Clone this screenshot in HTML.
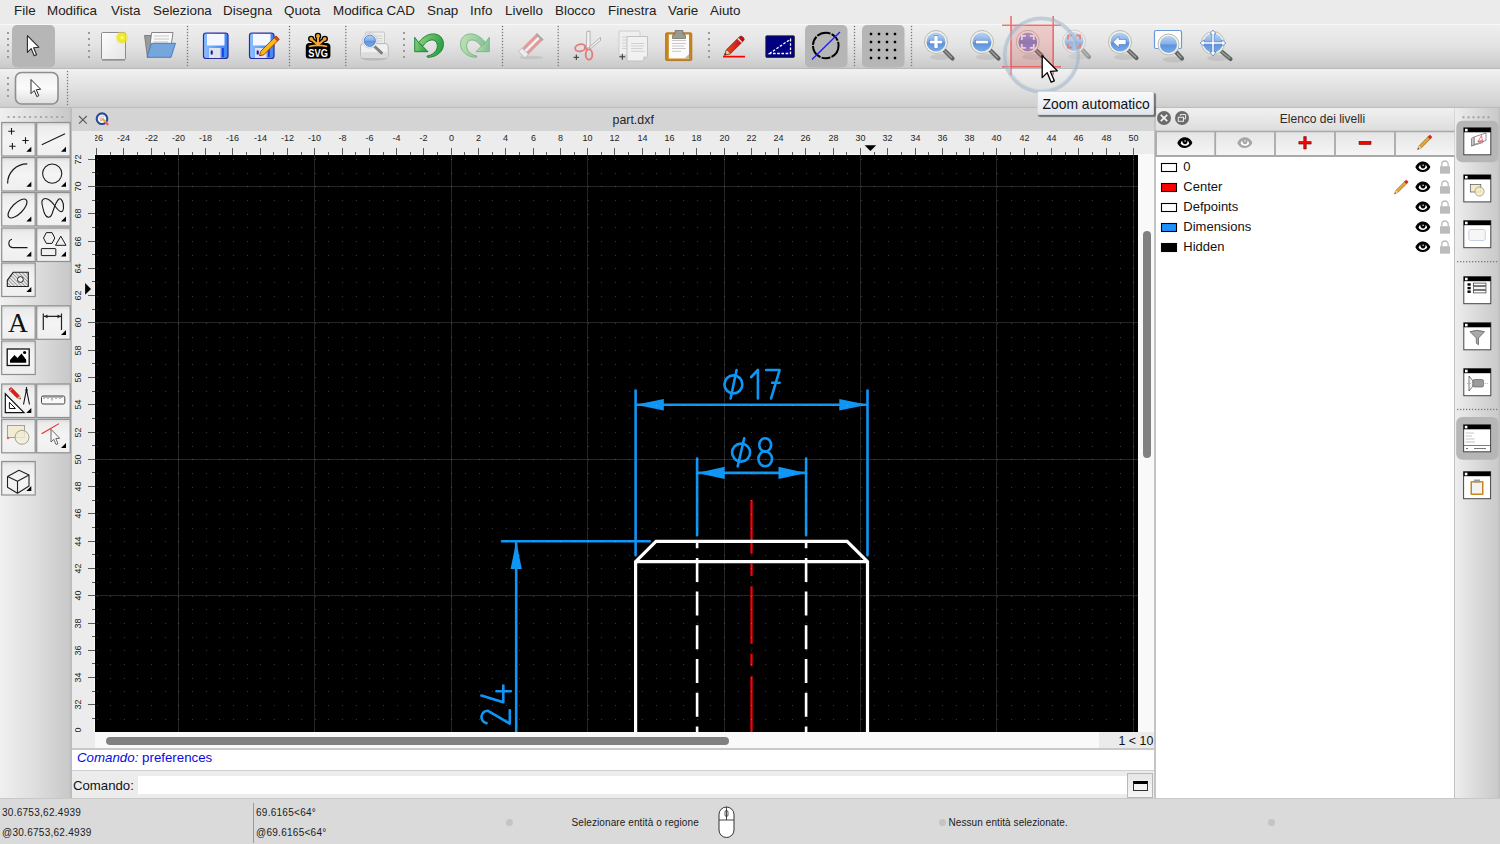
<!DOCTYPE html>
<html><head><meta charset="utf-8">
<style>
*{margin:0;padding:0;box-sizing:border-box}
html,body{width:1500px;height:844px;overflow:hidden;background:#ececec;font-family:"Liberation Sans",sans-serif;color:#222}
.a{position:absolute}
#menubar{left:0;top:0;width:1500px;height:24px;background:#ebebeb}
#menubar span{position:absolute;top:2.5px;font-size:13.4px;color:#222;line-height:16px}
#tb1{left:0;top:24px;width:1500px;height:45px;background:linear-gradient(#eeeeee,#e4e4e4 45%,#d4d4d4 80%,#c9c9c9);border-top:1px solid #f8f8f8;border-bottom:1px solid #b9b9b9}
#tb2{left:0;top:69px;width:1500px;height:39px;background:linear-gradient(#f1f1f1,#e2e2e2 45%,#d3d3d3 90%,#cdcdcd);border-bottom:1.5px solid #bcbcbc}
#palette{left:0;top:108px;width:70px;height:690px;background:linear-gradient(90deg,#f0f0f0,#dedede 50%,#c8c8c8)}
#palsep{left:70px;top:108px;width:2px;height:690px;background:#bdbdbd}
#mdititle{left:72px;top:108px;width:1082px;height:23px;background:#d4d4d4}
#ruler{left:72px;top:131px;width:1082px;height:24px;background:#ececec}
#vruler{left:72px;top:155px;width:23px;height:577px;background:#ececec}
#canvas{left:95px;top:155px;width:1043px;height:577px;background:#000}
#vscroll{left:1138px;top:155px;width:16px;height:577px;background:#f9f9f9}
#hscroll{left:95px;top:732px;width:1043px;height:16px;background:#f9f9f9}
#corner{left:72px;top:732px;width:23px;height:16px;background:#ececec}
#hist{left:72px;top:748px;width:1082px;height:23px;background:#fff;border-top:2px solid #c9c9c9;border-bottom:1px solid #cfcfcf}
#cmd{left:72px;top:771px;width:1082px;height:27px;background:#ececec}
#docksep{left:1154px;top:108px;width:2px;height:690px;background:#c4c4c4}
#layers{left:1156px;top:108px;width:298px;height:690px;background:#fff}
#rdock{left:1454px;top:108px;width:46px;height:690px;background:linear-gradient(90deg,#ededed,#d8d8d8 55%,#cacaca 95%,#bcbcbc);border-left:1px solid #c2c2c2}
#status{left:0;top:798px;width:1500px;height:46px;background:#dadada;border-top:1px solid #c8c8c8}
</style></head>
<body>
<div id="menubar" class="a">
<span style="left:14px">File</span><span style="left:47px">Modifica</span><span style="left:111px">Vista</span><span style="left:153px">Seleziona</span><span style="left:223px">Disegna</span><span style="left:284px">Quota</span><span style="left:333px">Modifica CAD</span><span style="left:427px">Snap</span><span style="left:470px">Info</span><span style="left:505px">Livello</span><span style="left:555px">Blocco</span><span style="left:608px">Finestra</span><span style="left:668px">Varie</span><span style="left:710px">Aiuto</span>
</div>
<div id="tb1" class="a"></div>
<div id="tb2" class="a"></div>
<svg class="a" style="left:0;top:0" width="1500" height="110" viewBox="0 0 1500 110"><defs>
<linearGradient id="gPage" x1="0" y1="0" x2="1" y2="1"><stop offset="0" stop-color="#fdfdfd"/><stop offset="1" stop-color="#e4e4e4"/></linearGradient>
<radialGradient id="gGlow"><stop offset="0" stop-color="#fff"/><stop offset="0.25" stop-color="#f4ee30"/><stop offset="0.6" stop-color="#ece41a" stop-opacity="0.9"/><stop offset="1" stop-color="#eee830" stop-opacity="0"/></radialGradient>
<linearGradient id="gFloppy" x1="0" y1="0" x2="1" y2="0"><stop offset="0" stop-color="#8fc0ff"/><stop offset="0.5" stop-color="#5d9cf8"/><stop offset="1" stop-color="#3f86f0"/></linearGradient>
<linearGradient id="gGlass" x1="0" y1="0" x2="0" y2="1"><stop offset="0" stop-color="#b9d3f2"/><stop offset="0.45" stop-color="#86b0e6"/><stop offset="0.55" stop-color="#5e93dc"/><stop offset="1" stop-color="#79a9ea"/></linearGradient>
<linearGradient id="gGlassP" x1="0" y1="0" x2="0" y2="1"><stop offset="0" stop-color="#9ea4dc"/><stop offset="0.5" stop-color="#7a82cc"/><stop offset="1" stop-color="#8c92d4"/></linearGradient>
<linearGradient id="gBtn2" x1="0" y1="0" x2="0" y2="1"><stop offset="0" stop-color="#f0f0f0"/><stop offset="0.5" stop-color="#fbfbfb"/><stop offset="1" stop-color="#dedede"/></linearGradient>
<linearGradient id="gPencil" x1="0" y1="0" x2="1" y2="0"><stop offset="0" stop-color="#e8541e"/><stop offset="1" stop-color="#c8001e"/></linearGradient>
<linearGradient id="gUndo" x1="0" y1="0" x2="1" y2="0.3"><stop offset="0" stop-color="#8ed47a"/><stop offset="1" stop-color="#2fa24a"/></linearGradient>
<linearGradient id="gRedo" x1="1" y1="0" x2="0" y2="0.3"><stop offset="0" stop-color="#c4e4b4"/><stop offset="1" stop-color="#86c496"/></linearGradient>
</defs><rect x="7" y="32" width="2" height="2" fill="#9a9a9a"/><rect x="7" y="38" width="2" height="2" fill="#9a9a9a"/><rect x="7" y="44" width="2" height="2" fill="#9a9a9a"/><rect x="7" y="50" width="2" height="2" fill="#9a9a9a"/><rect x="7" y="56" width="2" height="2" fill="#9a9a9a"/><rect x="88" y="32" width="2" height="2" fill="#9a9a9a"/><rect x="88" y="38" width="2" height="2" fill="#9a9a9a"/><rect x="88" y="44" width="2" height="2" fill="#9a9a9a"/><rect x="88" y="50" width="2" height="2" fill="#9a9a9a"/><rect x="88" y="56" width="2" height="2" fill="#9a9a9a"/><rect x="12" y="25" width="43" height="42.5" rx="5" fill="#b6b6b6"/><path d="M27.40 35.70 L27.40 52.40 L31.20 48.60 L34.20 55.80 L36.60 54.80 L33.60 47.70 L38.80 47.20Z" fill="#fff" stroke="#2a2a2a" stroke-width="1.1" stroke-linejoin="round"/><rect x="101.5" y="32.5" width="24" height="27" rx="1.2" fill="url(#gPage)" stroke="#8c8c8c" stroke-width="1"/><line x1="102" y1="60.3" x2="125" y2="60.3" stroke="#9a9a9a" stroke-width="1"/><circle cx="122" cy="37.7" r="7" fill="url(#gGlow)"/><path d="M144.5 35.5H151V56L147.5 57.5Z" fill="#9a9a9a" stroke="#707070" stroke-width="0.8"/><path d="M151.7 32.5H173L171.2 45H150Z" fill="#fafafa" stroke="#7a7a7a" stroke-width="0.9"/><path d="M154 36H169M154 39H169M153.5 42H168" stroke="#c4c4c4" stroke-width="1.2"/><path d="M151.3 43.3H175.5L171 57.3H147Z" fill="#76a6dc" stroke="#3f78c4" stroke-width="0.9"/><rect x="186.85" y="25.85" width="1.3" height="1.3" fill="#7a7a7a"/><rect x="186.85" y="28.85" width="1.3" height="1.3" fill="#7a7a7a"/><rect x="186.85" y="31.85" width="1.3" height="1.3" fill="#7a7a7a"/><rect x="186.85" y="34.85" width="1.3" height="1.3" fill="#7a7a7a"/><rect x="186.85" y="37.85" width="1.3" height="1.3" fill="#7a7a7a"/><rect x="186.85" y="40.85" width="1.3" height="1.3" fill="#7a7a7a"/><rect x="186.85" y="43.85" width="1.3" height="1.3" fill="#7a7a7a"/><rect x="186.85" y="46.85" width="1.3" height="1.3" fill="#7a7a7a"/><rect x="186.85" y="49.85" width="1.3" height="1.3" fill="#7a7a7a"/><rect x="186.85" y="52.85" width="1.3" height="1.3" fill="#7a7a7a"/><rect x="186.85" y="55.85" width="1.3" height="1.3" fill="#7a7a7a"/><rect x="186.85" y="58.85" width="1.3" height="1.3" fill="#7a7a7a"/><rect x="186.85" y="61.85" width="1.3" height="1.3" fill="#7a7a7a"/><rect x="186.85" y="64.85" width="1.3" height="1.3" fill="#7a7a7a"/><rect x="203.5" y="33" width="24.5" height="25.5" rx="2.5" fill="url(#gFloppy)" stroke="#2b2ba0" stroke-width="1.2"/><rect x="207.0" y="34" width="17.5" height="11.5" fill="#f4f7ff"/><rect x="209.0" y="48" width="11.5" height="10" fill="#e2e2ea"/><rect x="210.7" y="50.5" width="2" height="4" fill="#1010c0"/><rect x="222.0" y="48" width="1.8" height="9" fill="#1a3fd8"/><rect x="249.5" y="33" width="24.5" height="25.5" rx="2.5" fill="url(#gFloppy)" stroke="#2b2ba0" stroke-width="1.2"/><rect x="253.0" y="34" width="17.5" height="11.5" fill="#f4f7ff"/><rect x="255.0" y="48" width="11.5" height="10" fill="#e2e2ea"/><rect x="256.7" y="50.5" width="2" height="4" fill="#1010c0"/><rect x="268.0" y="48" width="1.8" height="9" fill="#1a3fd8"/><path d="M260.5 51.5L274.3 37.6L277.6 40.9L263.8 54.8L259.5 55.8Z" fill="#f8b818" stroke="#a83010" stroke-width="0.9"/><path d="M274.3 37.6L276 35.9L279.3 39.2L277.6 40.9Z" fill="#e84040" stroke="#a83010" stroke-width="0.9"/><rect x="288.85" y="25.85" width="1.3" height="1.3" fill="#7a7a7a"/><rect x="288.85" y="28.85" width="1.3" height="1.3" fill="#7a7a7a"/><rect x="288.85" y="31.85" width="1.3" height="1.3" fill="#7a7a7a"/><rect x="288.85" y="34.85" width="1.3" height="1.3" fill="#7a7a7a"/><rect x="288.85" y="37.85" width="1.3" height="1.3" fill="#7a7a7a"/><rect x="288.85" y="40.85" width="1.3" height="1.3" fill="#7a7a7a"/><rect x="288.85" y="43.85" width="1.3" height="1.3" fill="#7a7a7a"/><rect x="288.85" y="46.85" width="1.3" height="1.3" fill="#7a7a7a"/><rect x="288.85" y="49.85" width="1.3" height="1.3" fill="#7a7a7a"/><rect x="288.85" y="52.85" width="1.3" height="1.3" fill="#7a7a7a"/><rect x="288.85" y="55.85" width="1.3" height="1.3" fill="#7a7a7a"/><rect x="288.85" y="58.85" width="1.3" height="1.3" fill="#7a7a7a"/><rect x="288.85" y="61.85" width="1.3" height="1.3" fill="#7a7a7a"/><rect x="288.85" y="64.85" width="1.3" height="1.3" fill="#7a7a7a"/><rect x="305.8" y="43.5" width="24.6" height="15" rx="3" fill="#000"/><g stroke="#000" stroke-width="4.6" stroke-linecap="round"><path d="M318 45V36.3M318 45L311.3 39M318 45L324.7 39M318 45L309 45.3M318 45L327 45.3"/></g><g fill="#f5a630" stroke="#000" stroke-width="1.3"><circle cx="318" cy="36" r="2.6"/><circle cx="311.2" cy="38.8" r="2.5"/><circle cx="324.8" cy="38.8" r="2.5"/></g><g stroke="#f5a630" stroke-width="2.2" stroke-linecap="round"><path d="M318 45V36.3M318 45L311.3 39M318 45L324.7 39"/></g><path d="M308.8 46.5Q318 44.2 327.2 46.5" stroke="#f5a630" stroke-width="1.8" fill="none"/><text x="318.1" y="57.2" font-family="Liberation Sans" font-weight="bold" font-size="11.5" fill="#fff" text-anchor="middle" textLength="19.5" lengthAdjust="spacingAndGlyphs">SVG</text><rect x="345.1" y="25.85" width="1.3" height="1.3" fill="#7a7a7a"/><rect x="345.1" y="28.85" width="1.3" height="1.3" fill="#7a7a7a"/><rect x="345.1" y="31.85" width="1.3" height="1.3" fill="#7a7a7a"/><rect x="345.1" y="34.85" width="1.3" height="1.3" fill="#7a7a7a"/><rect x="345.1" y="37.85" width="1.3" height="1.3" fill="#7a7a7a"/><rect x="345.1" y="40.85" width="1.3" height="1.3" fill="#7a7a7a"/><rect x="345.1" y="43.85" width="1.3" height="1.3" fill="#7a7a7a"/><rect x="345.1" y="46.85" width="1.3" height="1.3" fill="#7a7a7a"/><rect x="345.1" y="49.85" width="1.3" height="1.3" fill="#7a7a7a"/><rect x="345.1" y="52.85" width="1.3" height="1.3" fill="#7a7a7a"/><rect x="345.1" y="55.85" width="1.3" height="1.3" fill="#7a7a7a"/><rect x="345.1" y="58.85" width="1.3" height="1.3" fill="#7a7a7a"/><rect x="345.1" y="61.85" width="1.3" height="1.3" fill="#7a7a7a"/><rect x="345.1" y="64.85" width="1.3" height="1.3" fill="#7a7a7a"/><ellipse cx="374" cy="58.5" rx="13" ry="2" fill="#000" opacity="0.12"/><rect x="365.5" y="32" width="19" height="14" rx="1.2" fill="#ececec" stroke="#c2c2c2" stroke-width="0.9"/><path d="M374 36H382M374 38.5H382M374 41H382" stroke="#d0d0d0" stroke-width="1"/><rect x="360.6" y="43.6" width="27.6" height="14" rx="2.5" fill="#f0f0f0" stroke="#b4b4b4" stroke-width="1"/><rect x="361.2" y="52.3" width="26.4" height="5.6" rx="2.2" fill="#dcdcdc"/><line x1="373.5" y1="45.5" x2="381.5" y2="52.8" stroke="#7e7e7e" stroke-width="3" stroke-linecap="round"/><circle cx="369.8" cy="40.8" r="7.3" fill="#f6f6f6" stroke="#c4c4c4" stroke-width="0.8"/><circle cx="369.8" cy="40.8" r="5.6" fill="url(#gGlass)" stroke="#4a7ed0" stroke-width="0.9"/><rect x="403" y="32" width="2" height="2" fill="#9a9a9a"/><rect x="403" y="38" width="2" height="2" fill="#9a9a9a"/><rect x="403" y="44" width="2" height="2" fill="#9a9a9a"/><rect x="403" y="50" width="2" height="2" fill="#9a9a9a"/><rect x="403" y="56" width="2" height="2" fill="#9a9a9a"/><path d="M418.5 42.5C424 35.5 431 32.5 437 34.5C442.5 36.5 444.5 42 443 47.5C441.5 53 435 57.5 427.5 57.3L427 56C432 55.5 436.5 51.5 437.2 47.5C438 42.5 435 39.5 431 40C428 40.5 425 43 422.7 46.3Z" fill="url(#gUndo)" stroke="#177a2c" stroke-width="0.9"/><path d="M414.7 37.3V51.7H428L422.7 46.3L418.5 42.5Z" fill="url(#gUndo)" stroke="#177a2c" stroke-width="0.9" stroke-linejoin="round"/><g transform="translate(904 0) scale(-1 1)"><path d="M418.5 42.5C424 35.5 431 32.5 437 34.5C442.5 36.5 444.5 42 443 47.5C441.5 53 435 57.5 427.5 57.3L427 56C432 55.5 436.5 51.5 437.2 47.5C438 42.5 435 39.5 431 40C428 40.5 425 43 422.7 46.3Z" fill="url(#gRedo)" stroke="#74b488" stroke-width="0.9"/><path d="M414.7 37.3V51.7H428L422.7 46.3L418.5 42.5Z" fill="url(#gRedo)" stroke="#74b488" stroke-width="0.9" stroke-linejoin="round"/></g><rect x="501.85" y="25.85" width="1.3" height="1.3" fill="#7a7a7a"/><rect x="501.85" y="28.85" width="1.3" height="1.3" fill="#7a7a7a"/><rect x="501.85" y="31.85" width="1.3" height="1.3" fill="#7a7a7a"/><rect x="501.85" y="34.85" width="1.3" height="1.3" fill="#7a7a7a"/><rect x="501.85" y="37.85" width="1.3" height="1.3" fill="#7a7a7a"/><rect x="501.85" y="40.85" width="1.3" height="1.3" fill="#7a7a7a"/><rect x="501.85" y="43.85" width="1.3" height="1.3" fill="#7a7a7a"/><rect x="501.85" y="46.85" width="1.3" height="1.3" fill="#7a7a7a"/><rect x="501.85" y="49.85" width="1.3" height="1.3" fill="#7a7a7a"/><rect x="501.85" y="52.85" width="1.3" height="1.3" fill="#7a7a7a"/><rect x="501.85" y="55.85" width="1.3" height="1.3" fill="#7a7a7a"/><rect x="501.85" y="58.85" width="1.3" height="1.3" fill="#7a7a7a"/><rect x="501.85" y="61.85" width="1.3" height="1.3" fill="#7a7a7a"/><rect x="501.85" y="64.85" width="1.3" height="1.3" fill="#7a7a7a"/><ellipse cx="531" cy="57.5" rx="12" ry="1.8" fill="#000" opacity="0.08"/><g transform="rotate(-45 531 45.5)"><rect x="518" y="41" width="26" height="9" fill="#e49a9a" stroke="#c8c8c8" stroke-width="0.6"/><rect x="522" y="44.2" width="22" height="2.6" fill="#f2f2f2"/><rect x="518" y="41" width="5" height="9" fill="#ececec" stroke="#b0b0b0" stroke-width="0.6"/><rect x="542" y="41" width="2" height="9" fill="#a8a8a8"/></g><rect x="557.6" y="25.85" width="1.3" height="1.3" fill="#7a7a7a"/><rect x="557.6" y="28.85" width="1.3" height="1.3" fill="#7a7a7a"/><rect x="557.6" y="31.85" width="1.3" height="1.3" fill="#7a7a7a"/><rect x="557.6" y="34.85" width="1.3" height="1.3" fill="#7a7a7a"/><rect x="557.6" y="37.85" width="1.3" height="1.3" fill="#7a7a7a"/><rect x="557.6" y="40.85" width="1.3" height="1.3" fill="#7a7a7a"/><rect x="557.6" y="43.85" width="1.3" height="1.3" fill="#7a7a7a"/><rect x="557.6" y="46.85" width="1.3" height="1.3" fill="#7a7a7a"/><rect x="557.6" y="49.85" width="1.3" height="1.3" fill="#7a7a7a"/><rect x="557.6" y="52.85" width="1.3" height="1.3" fill="#7a7a7a"/><rect x="557.6" y="55.85" width="1.3" height="1.3" fill="#7a7a7a"/><rect x="557.6" y="58.85" width="1.3" height="1.3" fill="#7a7a7a"/><rect x="557.6" y="61.85" width="1.3" height="1.3" fill="#7a7a7a"/><rect x="557.6" y="64.85" width="1.3" height="1.3" fill="#7a7a7a"/><path d="M586.5 48.5L586.8 31.5L590 31L590 47Z" fill="#f4f4f4" stroke="#9a9a9a" stroke-width="0.7"/><path d="M589.5 47L600.5 37.5V40.5L590 49Z" fill="#f4f4f4" stroke="#9a9a9a" stroke-width="0.7"/><ellipse cx="580.3" cy="47.8" rx="5.2" ry="3.5" transform="rotate(-12 580.3 47.8)" fill="none" stroke="#e07c7c" stroke-width="1.8"/><ellipse cx="589" cy="54.5" rx="3.3" ry="5.2" fill="none" stroke="#e07c7c" stroke-width="1.8"/><path d="M584 47.5L587.5 49.5" stroke="#e07c7c" stroke-width="2"/><path d="M576.3 54.5V60M573.5 57.3H579" stroke="#333" stroke-width="1"/><path d="M619 31H638.5Q640 31 640 32.5V55H619Z" fill="#efefef" stroke="#c6c6c6" stroke-width="0.8"/><path d="M622 37H630M622 40H630M622 43H630M622 46H630M622 48.5H630" stroke="#d2d2d2" stroke-width="1"/><path d="M627 36.5H647.5V56.5L643 61H627Z" fill="#f1f1f1" stroke="#bdbdbd" stroke-width="0.9"/><path d="M643 61V56.5H647.5Z" fill="#cfcfcf"/><path d="M631 43.5H644.5M631 46H644M631 48.5H642.5M631 51.3H644.5" stroke="#cdcdcd" stroke-width="0.9"/><path d="M622.3 53.8V59.8M619.3 56.8H625.3" stroke="#333" stroke-width="1"/><rect x="665.6" y="32.8" width="26.2" height="27.8" rx="1.3" fill="#c8861a" stroke="#a86a10" stroke-width="0.8"/><rect x="668.8" y="34.5" width="20.2" height="24" fill="#fbfbfb"/><path d="M684.5 58.5H689V54Z" fill="#b8b8b8"/><path d="M672.5 38.5V36Q672.5 34 674.5 34H675V30.5H683V34H683.5Q685.5 34 685.5 36V38.5Z" fill="#9a9a8e" stroke="#6a6a60" stroke-width="0.7"/><path d="M672 40.5H686M672 43.5H686M672 46H684M672 48.5H686M672 51.3H681" stroke="#c2c2c2" stroke-width="0.9"/><rect x="708" y="32" width="2" height="2" fill="#9a9a9a"/><rect x="708" y="38" width="2" height="2" fill="#9a9a9a"/><rect x="708" y="44" width="2" height="2" fill="#9a9a9a"/><rect x="708" y="50" width="2" height="2" fill="#9a9a9a"/><rect x="708" y="56" width="2" height="2" fill="#9a9a9a"/><rect x="723" y="55.8" width="22" height="1.7" fill="#f00"/><path d="M724.4 55.2L726.6 49.6L739.3 36.9Q741 35.2 742.8 37L743.4 37.6Q745.1 39.3 743.4 41L730.5 53.6Z" fill="url(#gPencil)" stroke="#6a3a10" stroke-width="0.8"/><path d="M724.4 55.2L726.6 49.6L730.5 53.6Z" fill="#f0c8a0" stroke="#6a3a10" stroke-width="0.6"/><path d="M724.4 55.2L725.3 53L726.6 54.3Z" fill="#222"/><path d="M737.8 38.4L741.9 42.5" stroke="#d8d8d8" stroke-width="1.6"/><rect x="765.8" y="35.8" width="28.6" height="21.6" rx="1" fill="#000080" stroke="#222" stroke-width="0.8"/><path d="M769.5 53.5L790.5 39.2V53.5Z" fill="none" stroke="#fff" stroke-width="1.3" stroke-dasharray="2.6 1.6"/><rect x="805" y="25" width="42.5" height="42.5" rx="5" fill="#b6b6b6"/><circle cx="825.75" cy="45.5" r="12.8" fill="none" stroke="#000" stroke-width="2" stroke-dasharray="14 1.2 9 1.2"/><line x1="812" y1="59.5" x2="840" y2="32" stroke="#1a1aff" stroke-width="1.3"/><rect x="853.85" y="25.85" width="1.3" height="1.3" fill="#7a7a7a"/><rect x="853.85" y="28.85" width="1.3" height="1.3" fill="#7a7a7a"/><rect x="853.85" y="31.85" width="1.3" height="1.3" fill="#7a7a7a"/><rect x="853.85" y="34.85" width="1.3" height="1.3" fill="#7a7a7a"/><rect x="853.85" y="37.85" width="1.3" height="1.3" fill="#7a7a7a"/><rect x="853.85" y="40.85" width="1.3" height="1.3" fill="#7a7a7a"/><rect x="853.85" y="43.85" width="1.3" height="1.3" fill="#7a7a7a"/><rect x="853.85" y="46.85" width="1.3" height="1.3" fill="#7a7a7a"/><rect x="853.85" y="49.85" width="1.3" height="1.3" fill="#7a7a7a"/><rect x="853.85" y="52.85" width="1.3" height="1.3" fill="#7a7a7a"/><rect x="853.85" y="55.85" width="1.3" height="1.3" fill="#7a7a7a"/><rect x="853.85" y="58.85" width="1.3" height="1.3" fill="#7a7a7a"/><rect x="853.85" y="61.85" width="1.3" height="1.3" fill="#7a7a7a"/><rect x="853.85" y="64.85" width="1.3" height="1.3" fill="#7a7a7a"/><rect x="862" y="25" width="42.5" height="42.5" rx="5" fill="#b6b6b6"/><rect x="869.8" y="32.8" width="2.4" height="2.4" fill="#000"/><rect x="869.8" y="40.8" width="2.4" height="2.4" fill="#000"/><rect x="869.8" y="48.8" width="2.4" height="2.4" fill="#000"/><rect x="869.8" y="56.8" width="2.4" height="2.4" fill="#000"/><rect x="877.8" y="32.8" width="2.4" height="2.4" fill="#000"/><rect x="877.8" y="40.8" width="2.4" height="2.4" fill="#000"/><rect x="877.8" y="48.8" width="2.4" height="2.4" fill="#000"/><rect x="877.8" y="56.8" width="2.4" height="2.4" fill="#000"/><rect x="885.8" y="32.8" width="2.4" height="2.4" fill="#000"/><rect x="885.8" y="40.8" width="2.4" height="2.4" fill="#000"/><rect x="885.8" y="48.8" width="2.4" height="2.4" fill="#000"/><rect x="885.8" y="56.8" width="2.4" height="2.4" fill="#000"/><rect x="893.8" y="32.8" width="2.4" height="2.4" fill="#000"/><rect x="893.8" y="40.8" width="2.4" height="2.4" fill="#000"/><rect x="893.8" y="48.8" width="2.4" height="2.4" fill="#000"/><rect x="893.8" y="56.8" width="2.4" height="2.4" fill="#000"/><rect x="910.85" y="25.85" width="1.3" height="1.3" fill="#7a7a7a"/><rect x="910.85" y="28.85" width="1.3" height="1.3" fill="#7a7a7a"/><rect x="910.85" y="31.85" width="1.3" height="1.3" fill="#7a7a7a"/><rect x="910.85" y="34.85" width="1.3" height="1.3" fill="#7a7a7a"/><rect x="910.85" y="37.85" width="1.3" height="1.3" fill="#7a7a7a"/><rect x="910.85" y="40.85" width="1.3" height="1.3" fill="#7a7a7a"/><rect x="910.85" y="43.85" width="1.3" height="1.3" fill="#7a7a7a"/><rect x="910.85" y="46.85" width="1.3" height="1.3" fill="#7a7a7a"/><rect x="910.85" y="49.85" width="1.3" height="1.3" fill="#7a7a7a"/><rect x="910.85" y="52.85" width="1.3" height="1.3" fill="#7a7a7a"/><rect x="910.85" y="55.85" width="1.3" height="1.3" fill="#7a7a7a"/><rect x="910.85" y="58.85" width="1.3" height="1.3" fill="#7a7a7a"/><rect x="910.85" y="61.85" width="1.3" height="1.3" fill="#7a7a7a"/><rect x="910.85" y="64.85" width="1.3" height="1.3" fill="#7a7a7a"/><ellipse cx="941" cy="57" rx="11" ry="3" fill="#000" opacity="0.08"/><line x1="944" y1="50" x2="952.5" y2="58.5" stroke="#5f6462" stroke-width="4.2" stroke-linecap="round"/><line x1="945" y1="51" x2="951.5" y2="57.5" stroke="#9aa09c" stroke-width="1.4" stroke-linecap="round"/><circle cx="936" cy="42" r="11.5" fill="#f2f2ea" stroke="#b9b9ad" stroke-width="1"/><circle cx="936" cy="42" r="9.5" fill="url(#gGlass)"/><rect x="934.2" y="35.5" width="3.6" height="13" fill="#fff" stroke="#3a6ab8" stroke-width="0.5"/><rect x="929.5" y="40.2" width="13" height="3.6" fill="#fff" stroke="#3a6ab8" stroke-width="0.5"/><rect x="934.5" y="36" width="3" height="12" fill="#fff"/><ellipse cx="987" cy="57" rx="11" ry="3" fill="#000" opacity="0.08"/><line x1="990" y1="50" x2="998.5" y2="58.5" stroke="#5f6462" stroke-width="4.2" stroke-linecap="round"/><line x1="991" y1="51" x2="997.5" y2="57.5" stroke="#9aa09c" stroke-width="1.4" stroke-linecap="round"/><circle cx="982" cy="42" r="11.5" fill="#f2f2ea" stroke="#b9b9ad" stroke-width="1"/><circle cx="982" cy="42" r="9.5" fill="url(#gGlass)"/><rect x="975.5" y="40.2" width="13" height="3.6" fill="#fff" stroke="#3a6ab8" stroke-width="0.5"/><ellipse cx="1032.8" cy="56.9" rx="11" ry="3" fill="#000" opacity="0.08"/><line x1="1035.8" y1="49.9" x2="1042" y2="56" stroke="#5f6462" stroke-width="4.2" stroke-linecap="round"/><line x1="1036.8" y1="50.9" x2="1041" y2="55" stroke="#9aa09c" stroke-width="1.4" stroke-linecap="round"/><circle cx="1027.8" cy="41.9" r="11.5" fill="#f2f2ea" stroke="#b9b9ad" stroke-width="1"/><circle cx="1027.8" cy="41.9" r="9.5" fill="url(#gGlassP)"/><path d="M1021.8 39.9V35.9H1025.8M1029.8 35.9H1033.8V39.9M1033.8 43.9V47.9H1029.8M1025.8 47.9H1021.8V43.9" fill="none" stroke="#f4eef4" stroke-width="1.8"/><g opacity="0.55"><ellipse cx="1079" cy="56.5" rx="11" ry="3" fill="#000" opacity="0.08"/><line x1="1082" y1="49.5" x2="1089" y2="57" stroke="#5f6462" stroke-width="4.2" stroke-linecap="round"/><line x1="1083" y1="50.5" x2="1088" y2="56" stroke="#9aa09c" stroke-width="1.4" stroke-linecap="round"/><circle cx="1074" cy="41.5" r="11.5" fill="#f2f2ea" stroke="#b9b9ad" stroke-width="1"/><circle cx="1074" cy="41.5" r="9.5" fill="url(#gGlass)"/><path d="M1068 39.5V35.5H1072M1076 35.5H1080V39.5M1080 43.5V47.5H1076M1072 47.5H1068V43.5" fill="none" stroke="#e83030" stroke-width="1.8"/></g><ellipse cx="1125" cy="57" rx="11" ry="3" fill="#000" opacity="0.08"/><line x1="1128" y1="50" x2="1136.5" y2="58" stroke="#5f6462" stroke-width="4.2" stroke-linecap="round"/><line x1="1129" y1="51" x2="1135.5" y2="57" stroke="#9aa09c" stroke-width="1.4" stroke-linecap="round"/><circle cx="1120" cy="42" r="11.5" fill="#f2f2ea" stroke="#b9b9ad" stroke-width="1"/><circle cx="1120" cy="42" r="9.5" fill="url(#gGlass)"/><path d="M1113 42L1119 36.5V39.5H1126V44.5H1119V47.5Z" fill="#fff" stroke="#3a6ab8" stroke-width="0.5"/><rect x="1154.5" y="30.5" width="27" height="18" rx="1.5" fill="#fff" stroke="#6a98d8" stroke-width="1.2"/><ellipse cx="1173.5" cy="59.5" rx="11" ry="3" fill="#000" opacity="0.08"/><line x1="1176.5" y1="52.5" x2="1182" y2="58.5" stroke="#5f6462" stroke-width="4.2" stroke-linecap="round"/><line x1="1177.5" y1="53.5" x2="1181" y2="57.5" stroke="#9aa09c" stroke-width="1.4" stroke-linecap="round"/><circle cx="1168.5" cy="44.5" r="10.5" fill="#f2f2ea" stroke="#b9b9ad" stroke-width="1"/><circle cx="1168.5" cy="44.5" r="8.5" fill="url(#gGlass)"/><ellipse cx="1218" cy="58" rx="11" ry="3" fill="#000" opacity="0.08"/><line x1="1221" y1="51" x2="1230.5" y2="59" stroke="#5f6462" stroke-width="4.2" stroke-linecap="round"/><line x1="1222" y1="52" x2="1229.5" y2="58" stroke="#9aa09c" stroke-width="1.4" stroke-linecap="round"/><circle cx="1213" cy="43" r="11.5" fill="#f2f2ea" stroke="#b9b9ad" stroke-width="1"/><circle cx="1213" cy="43" r="9.5" fill="url(#gGlass)"/><path d="M1213 30L1216 34H1214.2V41.8H1222V40L1226 43L1222 46V44.2H1214.2V52H1216L1213 56L1210 52H1211.8V44.2H1204V46L1200 43L1204 40V41.8H1211.8V34H1210Z" fill="#fff" stroke="#3a6ab8" stroke-width="0.6"/><rect x="7" y="77" width="2" height="2" fill="#9a9a9a"/><rect x="7" y="83" width="2" height="2" fill="#9a9a9a"/><rect x="7" y="89" width="2" height="2" fill="#9a9a9a"/><rect x="7" y="95" width="2" height="2" fill="#9a9a9a"/><rect x="15.5" y="72.5" width="42.5" height="31.5" rx="6" fill="url(#gBtn2)" stroke="#8e8e8e" stroke-width="1.6"/><path d="M31.00 79.50 L31.00 93.69 L34.23 90.47 L36.78 96.59 L38.82 95.73 L36.27 89.70 L40.69 89.28Z" fill="#fff" stroke="#2a2a2a" stroke-width="1.0" stroke-linejoin="round"/><rect x="66.85" y="70.85" width="1.3" height="1.3" fill="#7a7a7a"/><rect x="66.85" y="73.85" width="1.3" height="1.3" fill="#7a7a7a"/><rect x="66.85" y="76.85" width="1.3" height="1.3" fill="#7a7a7a"/><rect x="66.85" y="79.85" width="1.3" height="1.3" fill="#7a7a7a"/><rect x="66.85" y="82.85" width="1.3" height="1.3" fill="#7a7a7a"/><rect x="66.85" y="85.85" width="1.3" height="1.3" fill="#7a7a7a"/><rect x="66.85" y="88.85" width="1.3" height="1.3" fill="#7a7a7a"/><rect x="66.85" y="91.85" width="1.3" height="1.3" fill="#7a7a7a"/><rect x="66.85" y="94.85" width="1.3" height="1.3" fill="#7a7a7a"/><rect x="66.85" y="97.85" width="1.3" height="1.3" fill="#7a7a7a"/><rect x="66.85" y="100.85" width="1.3" height="1.3" fill="#7a7a7a"/><rect x="66.85" y="103.85" width="1.3" height="1.3" fill="#7a7a7a"/></svg>
<div id="palette" class="a"></div>
<div id="palsep" class="a"></div>
<svg class="a" style="left:0;top:108px" width="72" height="400" viewBox="0 108 72 400"><defs><linearGradient id="gPal" x1="0" y1="0" x2="0" y2="1"><stop offset="0" stop-color="#d8d8d8"/><stop offset="0.12" stop-color="#ececec"/><stop offset="0.5" stop-color="#f4f4f4"/><stop offset="1" stop-color="#efefef"/></linearGradient></defs><rect x="7.5" y="116" width="2" height="2" fill="#a8a8a8"/><rect x="12.9" y="116" width="2" height="2" fill="#a8a8a8"/><rect x="18.3" y="116" width="2" height="2" fill="#a8a8a8"/><rect x="23.700000000000003" y="116" width="2" height="2" fill="#a8a8a8"/><rect x="29.1" y="116" width="2" height="2" fill="#a8a8a8"/><rect x="34.5" y="116" width="2" height="2" fill="#a8a8a8"/><rect x="39.900000000000006" y="116" width="2" height="2" fill="#a8a8a8"/><rect x="45.300000000000004" y="116" width="2" height="2" fill="#a8a8a8"/><rect x="50.7" y="116" width="2" height="2" fill="#a8a8a8"/><rect x="56.1" y="116" width="2" height="2" fill="#a8a8a8"/><rect x="61.5" y="116" width="2" height="2" fill="#a8a8a8"/><rect x="1.7" y="122.5" width="33.5" height="33.5" fill="url(#gPal)" stroke="#8f8f8f" stroke-width="1.2"/><rect x="36.7" y="122.5" width="33.5" height="33.5" fill="url(#gPal)" stroke="#8f8f8f" stroke-width="1.2"/><rect x="1.7" y="157.5" width="33.5" height="33.5" fill="url(#gPal)" stroke="#8f8f8f" stroke-width="1.2"/><rect x="36.7" y="157.5" width="33.5" height="33.5" fill="url(#gPal)" stroke="#8f8f8f" stroke-width="1.2"/><rect x="1.7" y="192.5" width="33.5" height="33.5" fill="url(#gPal)" stroke="#8f8f8f" stroke-width="1.2"/><rect x="36.7" y="192.5" width="33.5" height="33.5" fill="url(#gPal)" stroke="#8f8f8f" stroke-width="1.2"/><rect x="1.7" y="228.0" width="33.5" height="33.5" fill="url(#gPal)" stroke="#8f8f8f" stroke-width="1.2"/><rect x="36.7" y="228.0" width="33.5" height="33.5" fill="url(#gPal)" stroke="#8f8f8f" stroke-width="1.2"/><rect x="1.7" y="263.0" width="33.5" height="33.5" fill="url(#gPal)" stroke="#8f8f8f" stroke-width="1.2"/><rect x="1.7" y="305.8" width="33.5" height="33.5" fill="url(#gPal)" stroke="#8f8f8f" stroke-width="1.2"/><rect x="36.7" y="305.8" width="33.5" height="33.5" fill="url(#gPal)" stroke="#8f8f8f" stroke-width="1.2"/><rect x="1.7" y="341.0" width="33.5" height="33.5" fill="url(#gPal)" stroke="#8f8f8f" stroke-width="1.2"/><rect x="1.7" y="384.0" width="33.5" height="33.5" fill="url(#gPal)" stroke="#8f8f8f" stroke-width="1.2"/><rect x="36.7" y="384.0" width="33.5" height="33.5" fill="url(#gPal)" stroke="#8f8f8f" stroke-width="1.2"/><rect x="1.7" y="419.3" width="33.5" height="33.5" fill="url(#gPal)" stroke="#8f8f8f" stroke-width="1.2"/><rect x="36.7" y="419.3" width="33.5" height="33.5" fill="url(#gPal)" stroke="#8f8f8f" stroke-width="1.2"/><rect x="1.7" y="461.5" width="33.5" height="33.5" fill="url(#gPal)" stroke="#8f8f8f" stroke-width="1.2"/><path d="M8.3 131.3H14.7M11.5 128.1V134.5M22.3 140.5H28.7M25.5 137.3V143.7M9.2 146.3H15.6M12.4 143.1V149.5" stroke="#1a1a1a" fill="none" stroke-width="1.1"/><path d="M26.3 151.8L31.3 146.8V151.8Z" fill="#000"/><path d="M41.8 144.8L65 133.8" stroke="#1a1a1a" fill="none" stroke-width="1.1"/><path d="M61 151.8L66 146.8V151.8Z" fill="#000"/><path d="M7.6 183.5A19.5 19.5 0 0 1 27.3 163.8" stroke="#1a1a1a" fill="none" stroke="#333" stroke-width="1.2"/><path d="M26.3 186.8L31.3 181.8V186.8Z" fill="#000"/><circle cx="52.2" cy="173.6" r="9.6" stroke="#1a1a1a" fill="none" stroke="#333" stroke-width="1.1"/><path d="M61 186.8L66 181.8V186.8Z" fill="#000"/><ellipse cx="17.5" cy="208.5" rx="12.3" ry="5.3" transform="rotate(-45 17.5 208.5)" stroke="#1a1a1a" fill="none" stroke="#333" stroke-width="1.1"/><path d="M26.3 221.5L31.3 216.5V221.5Z" fill="#000"/><path d="M42 201C44 196 50 199 55 206C59 212 63 214 63.5 208C64 202 61 198 59 199C56 201 54 208 52 214C50 219 46 218 44 212C42.5 207 41.5 203 42 201Z" stroke="#1a1a1a" fill="none" stroke="#333" stroke-width="1.1"/><path d="M61 221.5L66 216.5V221.5Z" fill="#000"/><path d="M12 239.2A4.3 4.3 0 0 0 12.5 247.6H27.5" stroke="#1a1a1a" fill="none" stroke="#333" stroke-width="1.1"/><path d="M26.3 256.5L31.3 251.5V256.5Z" fill="#000"/><path d="M43.5 238L46.3 232.6H52L54.8 238L52 243.4H46.3Z" stroke="#1a1a1a" fill="none" stroke="#333" stroke-width="1"/><path d="M55.5 245.3L60.8 236.2L66 245.3Z" stroke="#1a1a1a" fill="none" stroke="#333" stroke-width="1"/><rect x="41.3" y="248.6" width="14.5" height="7" rx="0.5" stroke="#1a1a1a" fill="none" stroke="#333" stroke-width="1"/><path d="M61 256.5L66 251.5V256.5Z" fill="#000"/><defs><pattern id="hatch" width="2.5" height="2.5" patternUnits="userSpaceOnUse" patternTransform="rotate(-45)"><rect width="2.5" height="2.5" fill="#e8e8e8"/><rect width="0.6" height="2.5" fill="#777"/></pattern></defs><path d="M7.3 286.5V280.3L13.2 272.3H28.3V286.5Z" fill="url(#hatch)" stroke="#222" stroke-width="1.1"/><circle cx="20.4" cy="279.5" r="2.9" fill="#f2f2f2" stroke="#222" stroke-width="1"/><path d="M26.3 292L31.3 287V292Z" fill="#000"/><text x="18" y="332.3" font-family="Liberation Serif" font-size="27.5" text-anchor="middle" fill="#111">A</text><path d="M43.3 313.5V330M61.5 313.5V330M44 316.4H61" stroke="#222" stroke-width="1.2" fill="none"/><path d="M44 316.4L47.5 314.6V318.2ZM61 316.4L57.5 314.6V318.2Z" fill="#222"/><path d="M61 335L66 330V335Z" fill="#000"/><rect x="7.2" y="349" width="22" height="16.5" fill="#fff" stroke="#111" stroke-width="1.3"/><path d="M10 362.8V360L14.5 355L17.5 358L21.5 353.5L26.2 359.8V362.8Z" fill="#000"/><circle cx="24.6" cy="352.5" r="1.6" fill="#000"/><path d="M5.3 393.8V412.7H24Z" fill="#fff" stroke="#111" stroke-width="1.2"/><path d="M9.4 402.3V408.5H15.4Z" fill="none" stroke="#111" stroke-width="1"/><g transform="rotate(45 15 393.5)"><rect x="7.5" y="391.7" width="12.5" height="3.6" rx="1.6" fill="#e01c1c" stroke="#a04020" stroke-width="0.4"/><rect x="9" y="391.9" width="1" height="3.2" fill="#f0a0a0"/><path d="M20 391.7L23 393.5L20 395.3Z" fill="#e8c090" stroke="#a06030" stroke-width="0.4"/><path d="M22 392.9L23 393.5L22 394.1Z" fill="#111"/></g><path d="M26.5 387V389.5M26.5 389.5L23.5 404.5M26.5 389.5L29.5 404.5" stroke="#111" stroke-width="1.1" fill="none"/><circle cx="26.5" cy="390" r="1.2" fill="#111"/><path d="M26.3 413L31.3 408V413Z" fill="#000"/><rect x="41.5" y="396" width="23.3" height="8" rx="1.5" fill="#fafafa" stroke="#444" stroke-width="1"/><path d="M44 396.5V399M46 396.5V398M48 396.5V399M50 396.5V398M52 396.5V400.5M54 396.5V398M56 396.5V399M58 396.5V398M60 396.5V399M62 396.5V398" stroke="#444" stroke-width="0.7"/><rect x="7.5" y="425.5" width="17" height="12" fill="#f2ecd4" stroke="#9a9a8a" stroke-width="0.9"/><circle cx="22" cy="437.3" r="7" fill="#f2ecd4" fill-opacity="0.8" stroke="#9a9a8a" stroke-width="0.9"/><circle cx="8" cy="438" r="1.3" fill="#f06060"/><path d="M41.6 433.8L59 423.6" stroke="#f02020" stroke-width="1.1"/><path d="M51 429.3V442L53.8 439.3L56 444.5L58 443.7L55.8 438.5L59.7 438.3Z" fill="#f8f8f8" stroke="#444" stroke-width="0.8"/><path d="M61 448L66 443V448Z" fill="#000"/><path d="M7.5 476.5L19 470.3L29 475L17.5 481.3ZM7.5 476.5V487.3L17.5 493.3V481.3M29 475V486L17.5 493.3" fill="none" stroke="#222" stroke-width="1.1" stroke-linejoin="round"/><path d="M26.3 491L31.3 486V491Z" fill="#000"/></svg>
<div id="mdititle" class="a"></div>
<svg class="a" style="left:72px;top:108px" width="60" height="23" viewBox="72 108 60 23"><path d="M79 116L86.8 123.7M86.8 116L79 123.7" stroke="#5a5a5a" stroke-width="1.1"/><circle cx="102" cy="118.7" r="5.3" fill="#f4f4f4" stroke="#2a4a98" stroke-width="2.1"/><path d="M99 118.3H104M101 115.8V121" stroke="#b8b8b8" stroke-width="0.7"/><path d="M100 120.2H102.5M102.8 115.8L103.5 117" stroke="#e06060" stroke-width="0.6"/><path d="M102.5 118.8L106.5 123" stroke="#f2a818" stroke-width="2"/><path d="M106.3 122.8L107.6 124.3" stroke="#e06060" stroke-width="2.2" stroke-linecap="round"/></svg>
<div class="a" style="left:612.5px;top:113.3px;font-size:12.4px;line-height:15px;color:#262626">part.dxf</div>
<div id="ruler" class="a"></div>
<svg class="a" style="left:95px;top:131px" width="1059" height="24" viewBox="95 131 1059 24"><rect x="95" y="154" width="1059" height="1" fill="#fafafa"/><path stroke="#5c5c5c" stroke-width="1" d="M96.5 148V155M110.5 152V155M123.5 148V155M137.5 152V155M151.5 148V155M164.5 152V155M178.5 148V155M192.5 152V155M205.5 148V155M219.5 152V155M232.5 148V155M246.5 152V155M260.5 148V155M273.5 152V155M287.5 148V155M301.5 152V155M314.5 148V155M328.5 152V155M342.5 148V155M355.5 152V155M369.5 148V155M383.5 152V155M396.5 148V155M410.5 152V155M423.5 148V155M437.5 152V155M451.5 148V155M464.5 152V155M478.5 148V155M492.5 152V155M505.5 148V155M519.5 152V155M533.5 148V155M546.5 152V155M560.5 148V155M574.5 152V155M587.5 148V155M601.5 152V155M614.5 148V155M628.5 152V155M642.5 148V155M655.5 152V155M669.5 148V155M683.5 152V155M696.5 148V155M710.5 152V155M724.5 148V155M737.5 152V155M751.5 148V155M765.5 152V155M778.5 148V155M792.5 152V155M805.5 148V155M819.5 152V155M833.5 148V155M846.5 152V155M860.5 148V155M874.5 152V155M887.5 148V155M901.5 152V155M915.5 148V155M928.5 152V155M942.5 148V155M956.5 152V155M969.5 148V155M983.5 152V155M996.5 148V155M1010.5 152V155M1024.5 148V155M1037.5 152V155M1051.5 148V155M1065.5 152V155M1078.5 148V155M1092.5 152V155M1106.5 148V155M1119.5 152V155M1133.5 148V155"/><g font-family="Liberation Sans" font-size="9" text-anchor="middle" fill="#1e1e1e"><text x="96.5" y="141">-26</text><text x="123.5" y="141">-24</text><text x="151.5" y="141">-22</text><text x="178.5" y="141">-20</text><text x="205.5" y="141">-18</text><text x="232.5" y="141">-16</text><text x="260.5" y="141">-14</text><text x="287.5" y="141">-12</text><text x="314.5" y="141">-10</text><text x="342.5" y="141">-8</text><text x="369.5" y="141">-6</text><text x="396.5" y="141">-4</text><text x="423.5" y="141">-2</text><text x="451.5" y="141">0</text><text x="478.5" y="141">2</text><text x="505.5" y="141">4</text><text x="533.5" y="141">6</text><text x="560.5" y="141">8</text><text x="587.5" y="141">10</text><text x="614.5" y="141">12</text><text x="642.5" y="141">14</text><text x="669.5" y="141">16</text><text x="696.5" y="141">18</text><text x="724.5" y="141">20</text><text x="751.5" y="141">22</text><text x="778.5" y="141">24</text><text x="805.5" y="141">26</text><text x="833.5" y="141">28</text><text x="860.5" y="141">30</text><text x="887.5" y="141">32</text><text x="915.5" y="141">34</text><text x="942.5" y="141">36</text><text x="969.5" y="141">38</text><text x="996.5" y="141">40</text><text x="1024.5" y="141">42</text><text x="1051.5" y="141">44</text><text x="1078.5" y="141">46</text><text x="1106.5" y="141">48</text><text x="1133.5" y="141">50</text></g><path d="M864.6 145.2H876.2L870.4 151Z" fill="#000"/></svg>
<div id="vruler" class="a"></div>
<svg class="a" style="left:72px;top:155px" width="23" height="577" viewBox="72 155 23 577"><rect x="94" y="155" width="1" height="577" fill="#fafafa"/><path stroke="#5c5c5c" stroke-width="1" d="M88 732.5H95M92 718.5H95M88 704.5H95M92 691.5H95M88 677.5H95M92 663.5H95M88 650.5H95M92 636.5H95M88 623.5H95M92 609.5H95M88 595.5H95M92 582.5H95M88 568.5H95M92 554.5H95M88 541.5H95M92 527.5H95M88 513.5H95M92 500.5H95M88 486.5H95M92 472.5H95M88 459.5H95M92 445.5H95M88 432.5H95M92 418.5H95M88 404.5H95M92 391.5H95M88 377.5H95M92 363.5H95M88 350.5H95M92 336.5H95M88 322.5H95M92 309.5H95M88 295.5H95M92 281.5H95M88 268.5H95M92 254.5H95M88 241.5H95M92 227.5H95M88 213.5H95M92 200.5H95M88 186.5H95M92 172.5H95M88 159.5H95"/><g font-family="Liberation Sans" font-size="9" text-anchor="middle" fill="#1e1e1e"><text transform="translate(81.2 732.5) rotate(-90)" y="0">30</text><text transform="translate(81.2 704.5) rotate(-90)" y="0">32</text><text transform="translate(81.2 677.5) rotate(-90)" y="0">34</text><text transform="translate(81.2 650.5) rotate(-90)" y="0">36</text><text transform="translate(81.2 623.5) rotate(-90)" y="0">38</text><text transform="translate(81.2 595.5) rotate(-90)" y="0">40</text><text transform="translate(81.2 568.5) rotate(-90)" y="0">42</text><text transform="translate(81.2 541.5) rotate(-90)" y="0">44</text><text transform="translate(81.2 513.5) rotate(-90)" y="0">46</text><text transform="translate(81.2 486.5) rotate(-90)" y="0">48</text><text transform="translate(81.2 459.5) rotate(-90)" y="0">50</text><text transform="translate(81.2 432.5) rotate(-90)" y="0">52</text><text transform="translate(81.2 404.5) rotate(-90)" y="0">54</text><text transform="translate(81.2 377.5) rotate(-90)" y="0">56</text><text transform="translate(81.2 350.5) rotate(-90)" y="0">58</text><text transform="translate(81.2 322.5) rotate(-90)" y="0">60</text><text transform="translate(81.2 295.5) rotate(-90)" y="0">62</text><text transform="translate(81.2 268.5) rotate(-90)" y="0">64</text><text transform="translate(81.2 241.5) rotate(-90)" y="0">66</text><text transform="translate(81.2 213.5) rotate(-90)" y="0">68</text><text transform="translate(81.2 186.5) rotate(-90)" y="0">70</text><text transform="translate(81.2 159.5) rotate(-90)" y="0">72</text></g><path d="M85.1 283V294.7L91 288.9Z" fill="#000"/></svg>
<svg class="a" style="left:95px;top:155px" width="1043" height="577" viewBox="95 155 1043 577"><rect x="95" y="155" width="1043" height="577" fill="#000"/><g fill="#262626"><rect x="178" y="155" width="1" height="577"/><rect x="314" y="155" width="1" height="577"/><rect x="451" y="155" width="1" height="577"/><rect x="587" y="155" width="1" height="577"/><rect x="724" y="155" width="1" height="577"/><rect x="860" y="155" width="1" height="577"/><rect x="996" y="155" width="1" height="577"/><rect x="1133" y="155" width="1" height="577"/><rect x="95" y="595" width="1043" height="1"/><rect x="95" y="459" width="1043" height="1"/><rect x="95" y="322" width="1043" height="1"/><rect x="95" y="186" width="1043" height="1"/></g><g stroke="#0f96f5" stroke-width="2.6" fill="none" stroke-linecap="round" stroke-linejoin="round"><path d="M635.6 390.5V555.3M867.5 390.5V555.3M635.6 404.8H867.5"/><path d="M697.1 458.6V535.2M806.1 458.6V535.2M697.1 472.9H806.1"/><path d="M502 541.3H649.8M516.2 541.3V740"/><circle cx="733.4" cy="384.4" r="9"/><path d="M730.6 398.4L736.6 370"/><path d="M751.2 377L757.9 370V398.4M766.1 370H779.6L771.1 398.4M772.1 382.7H779.6"/><circle cx="741.1" cy="452.6" r="9"/><path d="M737.7 466.4L744.2 438.2"/><ellipse cx="765.2" cy="444.9" rx="5.9" ry="6.6"/><ellipse cx="765.2" cy="458.8" rx="6.8" ry="7.4"/><path d="M486.6 723.1A6.2 6.2 0 0 1 488 710.8L509.8 723.6V710.3"/><path d="M481.4 695.6L503.3 702.2V685.6M496.4 691.3H510.8"/></g><g fill="#0f96f5"><path d="M635.6 404.8L663.8 399 663.8 410.6Z"/><path d="M867.5 404.8L839.3 399 839.3 410.6Z"/><path d="M697.1 472.9L724.7 466.8 724.7 479Z"/><path d="M806.1 472.9L778.5 466.8 778.5 479Z"/><path d="M516.2 541.3L510.6 569.1 521.8 569.1Z"/></g><g stroke="#fff" stroke-width="2.6" fill="none"><path d="M697.1 541.3V740M806.1 541.3V740" stroke-dasharray="24 9.7" stroke-dashoffset="17.1"/></g><path d="M751.5 500V740" stroke="#f00" stroke-width="2.2" fill="none" stroke-dasharray="57.6 9.9 12.3 10.3" stroke-dashoffset="3.9"/><g stroke="#fff" stroke-width="3.2" fill="none" stroke-linejoin="miter"><path d="M635.6 740V561.7L656 541.3H847.1L867.5 561.7V740M635.6 561.7H867.5"/></g><path fill="#fff" fill-opacity="0.215" d="M97 719h1v1h-1zM97 705h1v1h-1zM97 691h1v1h-1zM97 678h1v1h-1zM97 664h1v1h-1zM97 650h1v1h-1zM97 637h1v1h-1zM97 623h1v1h-1zM97 609h1v1h-1zM97 596h1v1h-1zM97 582h1v1h-1zM97 568h1v1h-1zM97 555h1v1h-1zM97 541h1v1h-1zM97 528h1v1h-1zM97 514h1v1h-1zM97 500h1v1h-1zM97 487h1v1h-1zM97 473h1v1h-1zM97 459h1v1h-1zM97 446h1v1h-1zM97 432h1v1h-1zM97 418h1v1h-1zM97 405h1v1h-1zM97 391h1v1h-1zM97 377h1v1h-1zM97 364h1v1h-1zM97 350h1v1h-1zM97 337h1v1h-1zM97 323h1v1h-1zM97 309h1v1h-1zM97 296h1v1h-1zM97 282h1v1h-1zM97 268h1v1h-1zM97 255h1v1h-1zM97 241h1v1h-1zM97 227h1v1h-1zM97 214h1v1h-1zM97 200h1v1h-1zM97 186h1v1h-1zM97 173h1v1h-1zM97 159h1v1h-1zM110 719h1v1h-1zM110 705h1v1h-1zM110 691h1v1h-1zM110 678h1v1h-1zM110 664h1v1h-1zM110 650h1v1h-1zM110 637h1v1h-1zM110 623h1v1h-1zM110 609h1v1h-1zM110 596h1v1h-1zM110 582h1v1h-1zM110 568h1v1h-1zM110 555h1v1h-1zM110 541h1v1h-1zM110 528h1v1h-1zM110 514h1v1h-1zM110 500h1v1h-1zM110 487h1v1h-1zM110 473h1v1h-1zM110 459h1v1h-1zM110 446h1v1h-1zM110 432h1v1h-1zM110 418h1v1h-1zM110 405h1v1h-1zM110 391h1v1h-1zM110 377h1v1h-1zM110 364h1v1h-1zM110 350h1v1h-1zM110 337h1v1h-1zM110 323h1v1h-1zM110 309h1v1h-1zM110 296h1v1h-1zM110 282h1v1h-1zM110 268h1v1h-1zM110 255h1v1h-1zM110 241h1v1h-1zM110 227h1v1h-1zM110 214h1v1h-1zM110 200h1v1h-1zM110 186h1v1h-1zM110 173h1v1h-1zM110 159h1v1h-1zM124 719h1v1h-1zM124 705h1v1h-1zM124 691h1v1h-1zM124 678h1v1h-1zM124 664h1v1h-1zM124 650h1v1h-1zM124 637h1v1h-1zM124 623h1v1h-1zM124 609h1v1h-1zM124 596h1v1h-1zM124 582h1v1h-1zM124 568h1v1h-1zM124 555h1v1h-1zM124 541h1v1h-1zM124 528h1v1h-1zM124 514h1v1h-1zM124 500h1v1h-1zM124 487h1v1h-1zM124 473h1v1h-1zM124 459h1v1h-1zM124 446h1v1h-1zM124 432h1v1h-1zM124 418h1v1h-1zM124 405h1v1h-1zM124 391h1v1h-1zM124 377h1v1h-1zM124 364h1v1h-1zM124 350h1v1h-1zM124 337h1v1h-1zM124 323h1v1h-1zM124 309h1v1h-1zM124 296h1v1h-1zM124 282h1v1h-1zM124 268h1v1h-1zM124 255h1v1h-1zM124 241h1v1h-1zM124 227h1v1h-1zM124 214h1v1h-1zM124 200h1v1h-1zM124 186h1v1h-1zM124 173h1v1h-1zM124 159h1v1h-1zM137 719h1v1h-1zM137 705h1v1h-1zM137 691h1v1h-1zM137 678h1v1h-1zM137 664h1v1h-1zM137 650h1v1h-1zM137 637h1v1h-1zM137 623h1v1h-1zM137 609h1v1h-1zM137 596h1v1h-1zM137 582h1v1h-1zM137 568h1v1h-1zM137 555h1v1h-1zM137 541h1v1h-1zM137 528h1v1h-1zM137 514h1v1h-1zM137 500h1v1h-1zM137 487h1v1h-1zM137 473h1v1h-1zM137 459h1v1h-1zM137 446h1v1h-1zM137 432h1v1h-1zM137 418h1v1h-1zM137 405h1v1h-1zM137 391h1v1h-1zM137 377h1v1h-1zM137 364h1v1h-1zM137 350h1v1h-1zM137 337h1v1h-1zM137 323h1v1h-1zM137 309h1v1h-1zM137 296h1v1h-1zM137 282h1v1h-1zM137 268h1v1h-1zM137 255h1v1h-1zM137 241h1v1h-1zM137 227h1v1h-1zM137 214h1v1h-1zM137 200h1v1h-1zM137 186h1v1h-1zM137 173h1v1h-1zM137 159h1v1h-1zM151 719h1v1h-1zM151 705h1v1h-1zM151 691h1v1h-1zM151 678h1v1h-1zM151 664h1v1h-1zM151 650h1v1h-1zM151 637h1v1h-1zM151 623h1v1h-1zM151 609h1v1h-1zM151 596h1v1h-1zM151 582h1v1h-1zM151 568h1v1h-1zM151 555h1v1h-1zM151 541h1v1h-1zM151 528h1v1h-1zM151 514h1v1h-1zM151 500h1v1h-1zM151 487h1v1h-1zM151 473h1v1h-1zM151 459h1v1h-1zM151 446h1v1h-1zM151 432h1v1h-1zM151 418h1v1h-1zM151 405h1v1h-1zM151 391h1v1h-1zM151 377h1v1h-1zM151 364h1v1h-1zM151 350h1v1h-1zM151 337h1v1h-1zM151 323h1v1h-1zM151 309h1v1h-1zM151 296h1v1h-1zM151 282h1v1h-1zM151 268h1v1h-1zM151 255h1v1h-1zM151 241h1v1h-1zM151 227h1v1h-1zM151 214h1v1h-1zM151 200h1v1h-1zM151 186h1v1h-1zM151 173h1v1h-1zM151 159h1v1h-1zM165 719h1v1h-1zM165 705h1v1h-1zM165 691h1v1h-1zM165 678h1v1h-1zM165 664h1v1h-1zM165 650h1v1h-1zM165 637h1v1h-1zM165 623h1v1h-1zM165 609h1v1h-1zM165 596h1v1h-1zM165 582h1v1h-1zM165 568h1v1h-1zM165 555h1v1h-1zM165 541h1v1h-1zM165 528h1v1h-1zM165 514h1v1h-1zM165 500h1v1h-1zM165 487h1v1h-1zM165 473h1v1h-1zM165 459h1v1h-1zM165 446h1v1h-1zM165 432h1v1h-1zM165 418h1v1h-1zM165 405h1v1h-1zM165 391h1v1h-1zM165 377h1v1h-1zM165 364h1v1h-1zM165 350h1v1h-1zM165 337h1v1h-1zM165 323h1v1h-1zM165 309h1v1h-1zM165 296h1v1h-1zM165 282h1v1h-1zM165 268h1v1h-1zM165 255h1v1h-1zM165 241h1v1h-1zM165 227h1v1h-1zM165 214h1v1h-1zM165 200h1v1h-1zM165 186h1v1h-1zM165 173h1v1h-1zM165 159h1v1h-1zM178 719h1v1h-1zM178 705h1v1h-1zM178 691h1v1h-1zM178 678h1v1h-1zM178 664h1v1h-1zM178 650h1v1h-1zM178 637h1v1h-1zM178 623h1v1h-1zM178 609h1v1h-1zM178 596h1v1h-1zM178 582h1v1h-1zM178 568h1v1h-1zM178 555h1v1h-1zM178 541h1v1h-1zM178 528h1v1h-1zM178 514h1v1h-1zM178 500h1v1h-1zM178 487h1v1h-1zM178 473h1v1h-1zM178 459h1v1h-1zM178 446h1v1h-1zM178 432h1v1h-1zM178 418h1v1h-1zM178 405h1v1h-1zM178 391h1v1h-1zM178 377h1v1h-1zM178 364h1v1h-1zM178 350h1v1h-1zM178 337h1v1h-1zM178 323h1v1h-1zM178 309h1v1h-1zM178 296h1v1h-1zM178 282h1v1h-1zM178 268h1v1h-1zM178 255h1v1h-1zM178 241h1v1h-1zM178 227h1v1h-1zM178 214h1v1h-1zM178 200h1v1h-1zM178 186h1v1h-1zM178 173h1v1h-1zM178 159h1v1h-1zM192 719h1v1h-1zM192 705h1v1h-1zM192 691h1v1h-1zM192 678h1v1h-1zM192 664h1v1h-1zM192 650h1v1h-1zM192 637h1v1h-1zM192 623h1v1h-1zM192 609h1v1h-1zM192 596h1v1h-1zM192 582h1v1h-1zM192 568h1v1h-1zM192 555h1v1h-1zM192 541h1v1h-1zM192 528h1v1h-1zM192 514h1v1h-1zM192 500h1v1h-1zM192 487h1v1h-1zM192 473h1v1h-1zM192 459h1v1h-1zM192 446h1v1h-1zM192 432h1v1h-1zM192 418h1v1h-1zM192 405h1v1h-1zM192 391h1v1h-1zM192 377h1v1h-1zM192 364h1v1h-1zM192 350h1v1h-1zM192 337h1v1h-1zM192 323h1v1h-1zM192 309h1v1h-1zM192 296h1v1h-1zM192 282h1v1h-1zM192 268h1v1h-1zM192 255h1v1h-1zM192 241h1v1h-1zM192 227h1v1h-1zM192 214h1v1h-1zM192 200h1v1h-1zM192 186h1v1h-1zM192 173h1v1h-1zM192 159h1v1h-1zM206 719h1v1h-1zM206 705h1v1h-1zM206 691h1v1h-1zM206 678h1v1h-1zM206 664h1v1h-1zM206 650h1v1h-1zM206 637h1v1h-1zM206 623h1v1h-1zM206 609h1v1h-1zM206 596h1v1h-1zM206 582h1v1h-1zM206 568h1v1h-1zM206 555h1v1h-1zM206 541h1v1h-1zM206 528h1v1h-1zM206 514h1v1h-1zM206 500h1v1h-1zM206 487h1v1h-1zM206 473h1v1h-1zM206 459h1v1h-1zM206 446h1v1h-1zM206 432h1v1h-1zM206 418h1v1h-1zM206 405h1v1h-1zM206 391h1v1h-1zM206 377h1v1h-1zM206 364h1v1h-1zM206 350h1v1h-1zM206 337h1v1h-1zM206 323h1v1h-1zM206 309h1v1h-1zM206 296h1v1h-1zM206 282h1v1h-1zM206 268h1v1h-1zM206 255h1v1h-1zM206 241h1v1h-1zM206 227h1v1h-1zM206 214h1v1h-1zM206 200h1v1h-1zM206 186h1v1h-1zM206 173h1v1h-1zM206 159h1v1h-1zM219 719h1v1h-1zM219 705h1v1h-1zM219 691h1v1h-1zM219 678h1v1h-1zM219 664h1v1h-1zM219 650h1v1h-1zM219 637h1v1h-1zM219 623h1v1h-1zM219 609h1v1h-1zM219 596h1v1h-1zM219 582h1v1h-1zM219 568h1v1h-1zM219 555h1v1h-1zM219 541h1v1h-1zM219 528h1v1h-1zM219 514h1v1h-1zM219 500h1v1h-1zM219 487h1v1h-1zM219 473h1v1h-1zM219 459h1v1h-1zM219 446h1v1h-1zM219 432h1v1h-1zM219 418h1v1h-1zM219 405h1v1h-1zM219 391h1v1h-1zM219 377h1v1h-1zM219 364h1v1h-1zM219 350h1v1h-1zM219 337h1v1h-1zM219 323h1v1h-1zM219 309h1v1h-1zM219 296h1v1h-1zM219 282h1v1h-1zM219 268h1v1h-1zM219 255h1v1h-1zM219 241h1v1h-1zM219 227h1v1h-1zM219 214h1v1h-1zM219 200h1v1h-1zM219 186h1v1h-1zM219 173h1v1h-1zM219 159h1v1h-1zM233 719h1v1h-1zM233 705h1v1h-1zM233 691h1v1h-1zM233 678h1v1h-1zM233 664h1v1h-1zM233 650h1v1h-1zM233 637h1v1h-1zM233 623h1v1h-1zM233 609h1v1h-1zM233 596h1v1h-1zM233 582h1v1h-1zM233 568h1v1h-1zM233 555h1v1h-1zM233 541h1v1h-1zM233 528h1v1h-1zM233 514h1v1h-1zM233 500h1v1h-1zM233 487h1v1h-1zM233 473h1v1h-1zM233 459h1v1h-1zM233 446h1v1h-1zM233 432h1v1h-1zM233 418h1v1h-1zM233 405h1v1h-1zM233 391h1v1h-1zM233 377h1v1h-1zM233 364h1v1h-1zM233 350h1v1h-1zM233 337h1v1h-1zM233 323h1v1h-1zM233 309h1v1h-1zM233 296h1v1h-1zM233 282h1v1h-1zM233 268h1v1h-1zM233 255h1v1h-1zM233 241h1v1h-1zM233 227h1v1h-1zM233 214h1v1h-1zM233 200h1v1h-1zM233 186h1v1h-1zM233 173h1v1h-1zM233 159h1v1h-1zM247 719h1v1h-1zM247 705h1v1h-1zM247 691h1v1h-1zM247 678h1v1h-1zM247 664h1v1h-1zM247 650h1v1h-1zM247 637h1v1h-1zM247 623h1v1h-1zM247 609h1v1h-1zM247 596h1v1h-1zM247 582h1v1h-1zM247 568h1v1h-1zM247 555h1v1h-1zM247 541h1v1h-1zM247 528h1v1h-1zM247 514h1v1h-1zM247 500h1v1h-1zM247 487h1v1h-1zM247 473h1v1h-1zM247 459h1v1h-1zM247 446h1v1h-1zM247 432h1v1h-1zM247 418h1v1h-1zM247 405h1v1h-1zM247 391h1v1h-1zM247 377h1v1h-1zM247 364h1v1h-1zM247 350h1v1h-1zM247 337h1v1h-1zM247 323h1v1h-1zM247 309h1v1h-1zM247 296h1v1h-1zM247 282h1v1h-1zM247 268h1v1h-1zM247 255h1v1h-1zM247 241h1v1h-1zM247 227h1v1h-1zM247 214h1v1h-1zM247 200h1v1h-1zM247 186h1v1h-1zM247 173h1v1h-1zM247 159h1v1h-1zM260 719h1v1h-1zM260 705h1v1h-1zM260 691h1v1h-1zM260 678h1v1h-1zM260 664h1v1h-1zM260 650h1v1h-1zM260 637h1v1h-1zM260 623h1v1h-1zM260 609h1v1h-1zM260 596h1v1h-1zM260 582h1v1h-1zM260 568h1v1h-1zM260 555h1v1h-1zM260 541h1v1h-1zM260 528h1v1h-1zM260 514h1v1h-1zM260 500h1v1h-1zM260 487h1v1h-1zM260 473h1v1h-1zM260 459h1v1h-1zM260 446h1v1h-1zM260 432h1v1h-1zM260 418h1v1h-1zM260 405h1v1h-1zM260 391h1v1h-1zM260 377h1v1h-1zM260 364h1v1h-1zM260 350h1v1h-1zM260 337h1v1h-1zM260 323h1v1h-1zM260 309h1v1h-1zM260 296h1v1h-1zM260 282h1v1h-1zM260 268h1v1h-1zM260 255h1v1h-1zM260 241h1v1h-1zM260 227h1v1h-1zM260 214h1v1h-1zM260 200h1v1h-1zM260 186h1v1h-1zM260 173h1v1h-1zM260 159h1v1h-1zM274 719h1v1h-1zM274 705h1v1h-1zM274 691h1v1h-1zM274 678h1v1h-1zM274 664h1v1h-1zM274 650h1v1h-1zM274 637h1v1h-1zM274 623h1v1h-1zM274 609h1v1h-1zM274 596h1v1h-1zM274 582h1v1h-1zM274 568h1v1h-1zM274 555h1v1h-1zM274 541h1v1h-1zM274 528h1v1h-1zM274 514h1v1h-1zM274 500h1v1h-1zM274 487h1v1h-1zM274 473h1v1h-1zM274 459h1v1h-1zM274 446h1v1h-1zM274 432h1v1h-1zM274 418h1v1h-1zM274 405h1v1h-1zM274 391h1v1h-1zM274 377h1v1h-1zM274 364h1v1h-1zM274 350h1v1h-1zM274 337h1v1h-1zM274 323h1v1h-1zM274 309h1v1h-1zM274 296h1v1h-1zM274 282h1v1h-1zM274 268h1v1h-1zM274 255h1v1h-1zM274 241h1v1h-1zM274 227h1v1h-1zM274 214h1v1h-1zM274 200h1v1h-1zM274 186h1v1h-1zM274 173h1v1h-1zM274 159h1v1h-1zM288 719h1v1h-1zM288 705h1v1h-1zM288 691h1v1h-1zM288 678h1v1h-1zM288 664h1v1h-1zM288 650h1v1h-1zM288 637h1v1h-1zM288 623h1v1h-1zM288 609h1v1h-1zM288 596h1v1h-1zM288 582h1v1h-1zM288 568h1v1h-1zM288 555h1v1h-1zM288 541h1v1h-1zM288 528h1v1h-1zM288 514h1v1h-1zM288 500h1v1h-1zM288 487h1v1h-1zM288 473h1v1h-1zM288 459h1v1h-1zM288 446h1v1h-1zM288 432h1v1h-1zM288 418h1v1h-1zM288 405h1v1h-1zM288 391h1v1h-1zM288 377h1v1h-1zM288 364h1v1h-1zM288 350h1v1h-1zM288 337h1v1h-1zM288 323h1v1h-1zM288 309h1v1h-1zM288 296h1v1h-1zM288 282h1v1h-1zM288 268h1v1h-1zM288 255h1v1h-1zM288 241h1v1h-1zM288 227h1v1h-1zM288 214h1v1h-1zM288 200h1v1h-1zM288 186h1v1h-1zM288 173h1v1h-1zM288 159h1v1h-1zM301 719h1v1h-1zM301 705h1v1h-1zM301 691h1v1h-1zM301 678h1v1h-1zM301 664h1v1h-1zM301 650h1v1h-1zM301 637h1v1h-1zM301 623h1v1h-1zM301 609h1v1h-1zM301 596h1v1h-1zM301 582h1v1h-1zM301 568h1v1h-1zM301 555h1v1h-1zM301 541h1v1h-1zM301 528h1v1h-1zM301 514h1v1h-1zM301 500h1v1h-1zM301 487h1v1h-1zM301 473h1v1h-1zM301 459h1v1h-1zM301 446h1v1h-1zM301 432h1v1h-1zM301 418h1v1h-1zM301 405h1v1h-1zM301 391h1v1h-1zM301 377h1v1h-1zM301 364h1v1h-1zM301 350h1v1h-1zM301 337h1v1h-1zM301 323h1v1h-1zM301 309h1v1h-1zM301 296h1v1h-1zM301 282h1v1h-1zM301 268h1v1h-1zM301 255h1v1h-1zM301 241h1v1h-1zM301 227h1v1h-1zM301 214h1v1h-1zM301 200h1v1h-1zM301 186h1v1h-1zM301 173h1v1h-1zM301 159h1v1h-1zM315 719h1v1h-1zM315 705h1v1h-1zM315 691h1v1h-1zM315 678h1v1h-1zM315 664h1v1h-1zM315 650h1v1h-1zM315 637h1v1h-1zM315 623h1v1h-1zM315 609h1v1h-1zM315 596h1v1h-1zM315 582h1v1h-1zM315 568h1v1h-1zM315 555h1v1h-1zM315 541h1v1h-1zM315 528h1v1h-1zM315 514h1v1h-1zM315 500h1v1h-1zM315 487h1v1h-1zM315 473h1v1h-1zM315 459h1v1h-1zM315 446h1v1h-1zM315 432h1v1h-1zM315 418h1v1h-1zM315 405h1v1h-1zM315 391h1v1h-1zM315 377h1v1h-1zM315 364h1v1h-1zM315 350h1v1h-1zM315 337h1v1h-1zM315 323h1v1h-1zM315 309h1v1h-1zM315 296h1v1h-1zM315 282h1v1h-1zM315 268h1v1h-1zM315 255h1v1h-1zM315 241h1v1h-1zM315 227h1v1h-1zM315 214h1v1h-1zM315 200h1v1h-1zM315 186h1v1h-1zM315 173h1v1h-1zM315 159h1v1h-1zM328 719h1v1h-1zM328 705h1v1h-1zM328 691h1v1h-1zM328 678h1v1h-1zM328 664h1v1h-1zM328 650h1v1h-1zM328 637h1v1h-1zM328 623h1v1h-1zM328 609h1v1h-1zM328 596h1v1h-1zM328 582h1v1h-1zM328 568h1v1h-1zM328 555h1v1h-1zM328 541h1v1h-1zM328 528h1v1h-1zM328 514h1v1h-1zM328 500h1v1h-1zM328 487h1v1h-1zM328 473h1v1h-1zM328 459h1v1h-1zM328 446h1v1h-1zM328 432h1v1h-1zM328 418h1v1h-1zM328 405h1v1h-1zM328 391h1v1h-1zM328 377h1v1h-1zM328 364h1v1h-1zM328 350h1v1h-1zM328 337h1v1h-1zM328 323h1v1h-1zM328 309h1v1h-1zM328 296h1v1h-1zM328 282h1v1h-1zM328 268h1v1h-1zM328 255h1v1h-1zM328 241h1v1h-1zM328 227h1v1h-1zM328 214h1v1h-1zM328 200h1v1h-1zM328 186h1v1h-1zM328 173h1v1h-1zM328 159h1v1h-1zM342 719h1v1h-1zM342 705h1v1h-1zM342 691h1v1h-1zM342 678h1v1h-1zM342 664h1v1h-1zM342 650h1v1h-1zM342 637h1v1h-1zM342 623h1v1h-1zM342 609h1v1h-1zM342 596h1v1h-1zM342 582h1v1h-1zM342 568h1v1h-1zM342 555h1v1h-1zM342 541h1v1h-1zM342 528h1v1h-1zM342 514h1v1h-1zM342 500h1v1h-1zM342 487h1v1h-1zM342 473h1v1h-1zM342 459h1v1h-1zM342 446h1v1h-1zM342 432h1v1h-1zM342 418h1v1h-1zM342 405h1v1h-1zM342 391h1v1h-1zM342 377h1v1h-1zM342 364h1v1h-1zM342 350h1v1h-1zM342 337h1v1h-1zM342 323h1v1h-1zM342 309h1v1h-1zM342 296h1v1h-1zM342 282h1v1h-1zM342 268h1v1h-1zM342 255h1v1h-1zM342 241h1v1h-1zM342 227h1v1h-1zM342 214h1v1h-1zM342 200h1v1h-1zM342 186h1v1h-1zM342 173h1v1h-1zM342 159h1v1h-1zM356 719h1v1h-1zM356 705h1v1h-1zM356 691h1v1h-1zM356 678h1v1h-1zM356 664h1v1h-1zM356 650h1v1h-1zM356 637h1v1h-1zM356 623h1v1h-1zM356 609h1v1h-1zM356 596h1v1h-1zM356 582h1v1h-1zM356 568h1v1h-1zM356 555h1v1h-1zM356 541h1v1h-1zM356 528h1v1h-1zM356 514h1v1h-1zM356 500h1v1h-1zM356 487h1v1h-1zM356 473h1v1h-1zM356 459h1v1h-1zM356 446h1v1h-1zM356 432h1v1h-1zM356 418h1v1h-1zM356 405h1v1h-1zM356 391h1v1h-1zM356 377h1v1h-1zM356 364h1v1h-1zM356 350h1v1h-1zM356 337h1v1h-1zM356 323h1v1h-1zM356 309h1v1h-1zM356 296h1v1h-1zM356 282h1v1h-1zM356 268h1v1h-1zM356 255h1v1h-1zM356 241h1v1h-1zM356 227h1v1h-1zM356 214h1v1h-1zM356 200h1v1h-1zM356 186h1v1h-1zM356 173h1v1h-1zM356 159h1v1h-1zM369 719h1v1h-1zM369 705h1v1h-1zM369 691h1v1h-1zM369 678h1v1h-1zM369 664h1v1h-1zM369 650h1v1h-1zM369 637h1v1h-1zM369 623h1v1h-1zM369 609h1v1h-1zM369 596h1v1h-1zM369 582h1v1h-1zM369 568h1v1h-1zM369 555h1v1h-1zM369 541h1v1h-1zM369 528h1v1h-1zM369 514h1v1h-1zM369 500h1v1h-1zM369 487h1v1h-1zM369 473h1v1h-1zM369 459h1v1h-1zM369 446h1v1h-1zM369 432h1v1h-1zM369 418h1v1h-1zM369 405h1v1h-1zM369 391h1v1h-1zM369 377h1v1h-1zM369 364h1v1h-1zM369 350h1v1h-1zM369 337h1v1h-1zM369 323h1v1h-1zM369 309h1v1h-1zM369 296h1v1h-1zM369 282h1v1h-1zM369 268h1v1h-1zM369 255h1v1h-1zM369 241h1v1h-1zM369 227h1v1h-1zM369 214h1v1h-1zM369 200h1v1h-1zM369 186h1v1h-1zM369 173h1v1h-1zM369 159h1v1h-1zM383 719h1v1h-1zM383 705h1v1h-1zM383 691h1v1h-1zM383 678h1v1h-1zM383 664h1v1h-1zM383 650h1v1h-1zM383 637h1v1h-1zM383 623h1v1h-1zM383 609h1v1h-1zM383 596h1v1h-1zM383 582h1v1h-1zM383 568h1v1h-1zM383 555h1v1h-1zM383 541h1v1h-1zM383 528h1v1h-1zM383 514h1v1h-1zM383 500h1v1h-1zM383 487h1v1h-1zM383 473h1v1h-1zM383 459h1v1h-1zM383 446h1v1h-1zM383 432h1v1h-1zM383 418h1v1h-1zM383 405h1v1h-1zM383 391h1v1h-1zM383 377h1v1h-1zM383 364h1v1h-1zM383 350h1v1h-1zM383 337h1v1h-1zM383 323h1v1h-1zM383 309h1v1h-1zM383 296h1v1h-1zM383 282h1v1h-1zM383 268h1v1h-1zM383 255h1v1h-1zM383 241h1v1h-1zM383 227h1v1h-1zM383 214h1v1h-1zM383 200h1v1h-1zM383 186h1v1h-1zM383 173h1v1h-1zM383 159h1v1h-1zM397 719h1v1h-1zM397 705h1v1h-1zM397 691h1v1h-1zM397 678h1v1h-1zM397 664h1v1h-1zM397 650h1v1h-1zM397 637h1v1h-1zM397 623h1v1h-1zM397 609h1v1h-1zM397 596h1v1h-1zM397 582h1v1h-1zM397 568h1v1h-1zM397 555h1v1h-1zM397 541h1v1h-1zM397 528h1v1h-1zM397 514h1v1h-1zM397 500h1v1h-1zM397 487h1v1h-1zM397 473h1v1h-1zM397 459h1v1h-1zM397 446h1v1h-1zM397 432h1v1h-1zM397 418h1v1h-1zM397 405h1v1h-1zM397 391h1v1h-1zM397 377h1v1h-1zM397 364h1v1h-1zM397 350h1v1h-1zM397 337h1v1h-1zM397 323h1v1h-1zM397 309h1v1h-1zM397 296h1v1h-1zM397 282h1v1h-1zM397 268h1v1h-1zM397 255h1v1h-1zM397 241h1v1h-1zM397 227h1v1h-1zM397 214h1v1h-1zM397 200h1v1h-1zM397 186h1v1h-1zM397 173h1v1h-1zM397 159h1v1h-1zM410 719h1v1h-1zM410 705h1v1h-1zM410 691h1v1h-1zM410 678h1v1h-1zM410 664h1v1h-1zM410 650h1v1h-1zM410 637h1v1h-1zM410 623h1v1h-1zM410 609h1v1h-1zM410 596h1v1h-1zM410 582h1v1h-1zM410 568h1v1h-1zM410 555h1v1h-1zM410 541h1v1h-1zM410 528h1v1h-1zM410 514h1v1h-1zM410 500h1v1h-1zM410 487h1v1h-1zM410 473h1v1h-1zM410 459h1v1h-1zM410 446h1v1h-1zM410 432h1v1h-1zM410 418h1v1h-1zM410 405h1v1h-1zM410 391h1v1h-1zM410 377h1v1h-1zM410 364h1v1h-1zM410 350h1v1h-1zM410 337h1v1h-1zM410 323h1v1h-1zM410 309h1v1h-1zM410 296h1v1h-1zM410 282h1v1h-1zM410 268h1v1h-1zM410 255h1v1h-1zM410 241h1v1h-1zM410 227h1v1h-1zM410 214h1v1h-1zM410 200h1v1h-1zM410 186h1v1h-1zM410 173h1v1h-1zM410 159h1v1h-1zM424 719h1v1h-1zM424 705h1v1h-1zM424 691h1v1h-1zM424 678h1v1h-1zM424 664h1v1h-1zM424 650h1v1h-1zM424 637h1v1h-1zM424 623h1v1h-1zM424 609h1v1h-1zM424 596h1v1h-1zM424 582h1v1h-1zM424 568h1v1h-1zM424 555h1v1h-1zM424 541h1v1h-1zM424 528h1v1h-1zM424 514h1v1h-1zM424 500h1v1h-1zM424 487h1v1h-1zM424 473h1v1h-1zM424 459h1v1h-1zM424 446h1v1h-1zM424 432h1v1h-1zM424 418h1v1h-1zM424 405h1v1h-1zM424 391h1v1h-1zM424 377h1v1h-1zM424 364h1v1h-1zM424 350h1v1h-1zM424 337h1v1h-1zM424 323h1v1h-1zM424 309h1v1h-1zM424 296h1v1h-1zM424 282h1v1h-1zM424 268h1v1h-1zM424 255h1v1h-1zM424 241h1v1h-1zM424 227h1v1h-1zM424 214h1v1h-1zM424 200h1v1h-1zM424 186h1v1h-1zM424 173h1v1h-1zM424 159h1v1h-1zM438 719h1v1h-1zM438 705h1v1h-1zM438 691h1v1h-1zM438 678h1v1h-1zM438 664h1v1h-1zM438 650h1v1h-1zM438 637h1v1h-1zM438 623h1v1h-1zM438 609h1v1h-1zM438 596h1v1h-1zM438 582h1v1h-1zM438 568h1v1h-1zM438 555h1v1h-1zM438 541h1v1h-1zM438 528h1v1h-1zM438 514h1v1h-1zM438 500h1v1h-1zM438 487h1v1h-1zM438 473h1v1h-1zM438 459h1v1h-1zM438 446h1v1h-1zM438 432h1v1h-1zM438 418h1v1h-1zM438 405h1v1h-1zM438 391h1v1h-1zM438 377h1v1h-1zM438 364h1v1h-1zM438 350h1v1h-1zM438 337h1v1h-1zM438 323h1v1h-1zM438 309h1v1h-1zM438 296h1v1h-1zM438 282h1v1h-1zM438 268h1v1h-1zM438 255h1v1h-1zM438 241h1v1h-1zM438 227h1v1h-1zM438 214h1v1h-1zM438 200h1v1h-1zM438 186h1v1h-1zM438 173h1v1h-1zM438 159h1v1h-1zM451 719h1v1h-1zM451 705h1v1h-1zM451 691h1v1h-1zM451 678h1v1h-1zM451 664h1v1h-1zM451 650h1v1h-1zM451 637h1v1h-1zM451 623h1v1h-1zM451 609h1v1h-1zM451 596h1v1h-1zM451 582h1v1h-1zM451 568h1v1h-1zM451 555h1v1h-1zM451 541h1v1h-1zM451 528h1v1h-1zM451 514h1v1h-1zM451 500h1v1h-1zM451 487h1v1h-1zM451 473h1v1h-1zM451 459h1v1h-1zM451 446h1v1h-1zM451 432h1v1h-1zM451 418h1v1h-1zM451 405h1v1h-1zM451 391h1v1h-1zM451 377h1v1h-1zM451 364h1v1h-1zM451 350h1v1h-1zM451 337h1v1h-1zM451 323h1v1h-1zM451 309h1v1h-1zM451 296h1v1h-1zM451 282h1v1h-1zM451 268h1v1h-1zM451 255h1v1h-1zM451 241h1v1h-1zM451 227h1v1h-1zM451 214h1v1h-1zM451 200h1v1h-1zM451 186h1v1h-1zM451 173h1v1h-1zM451 159h1v1h-1zM465 719h1v1h-1zM465 705h1v1h-1zM465 691h1v1h-1zM465 678h1v1h-1zM465 664h1v1h-1zM465 650h1v1h-1zM465 637h1v1h-1zM465 623h1v1h-1zM465 609h1v1h-1zM465 596h1v1h-1zM465 582h1v1h-1zM465 568h1v1h-1zM465 555h1v1h-1zM465 541h1v1h-1zM465 528h1v1h-1zM465 514h1v1h-1zM465 500h1v1h-1zM465 487h1v1h-1zM465 473h1v1h-1zM465 459h1v1h-1zM465 446h1v1h-1zM465 432h1v1h-1zM465 418h1v1h-1zM465 405h1v1h-1zM465 391h1v1h-1zM465 377h1v1h-1zM465 364h1v1h-1zM465 350h1v1h-1zM465 337h1v1h-1zM465 323h1v1h-1zM465 309h1v1h-1zM465 296h1v1h-1zM465 282h1v1h-1zM465 268h1v1h-1zM465 255h1v1h-1zM465 241h1v1h-1zM465 227h1v1h-1zM465 214h1v1h-1zM465 200h1v1h-1zM465 186h1v1h-1zM465 173h1v1h-1zM465 159h1v1h-1zM479 719h1v1h-1zM479 705h1v1h-1zM479 691h1v1h-1zM479 678h1v1h-1zM479 664h1v1h-1zM479 650h1v1h-1zM479 637h1v1h-1zM479 623h1v1h-1zM479 609h1v1h-1zM479 596h1v1h-1zM479 582h1v1h-1zM479 568h1v1h-1zM479 555h1v1h-1zM479 541h1v1h-1zM479 528h1v1h-1zM479 514h1v1h-1zM479 500h1v1h-1zM479 487h1v1h-1zM479 473h1v1h-1zM479 459h1v1h-1zM479 446h1v1h-1zM479 432h1v1h-1zM479 418h1v1h-1zM479 405h1v1h-1zM479 391h1v1h-1zM479 377h1v1h-1zM479 364h1v1h-1zM479 350h1v1h-1zM479 337h1v1h-1zM479 323h1v1h-1zM479 309h1v1h-1zM479 296h1v1h-1zM479 282h1v1h-1zM479 268h1v1h-1zM479 255h1v1h-1zM479 241h1v1h-1zM479 227h1v1h-1zM479 214h1v1h-1zM479 200h1v1h-1zM479 186h1v1h-1zM479 173h1v1h-1zM479 159h1v1h-1zM492 719h1v1h-1zM492 705h1v1h-1zM492 691h1v1h-1zM492 678h1v1h-1zM492 664h1v1h-1zM492 650h1v1h-1zM492 637h1v1h-1zM492 623h1v1h-1zM492 609h1v1h-1zM492 596h1v1h-1zM492 582h1v1h-1zM492 568h1v1h-1zM492 555h1v1h-1zM492 541h1v1h-1zM492 528h1v1h-1zM492 514h1v1h-1zM492 500h1v1h-1zM492 487h1v1h-1zM492 473h1v1h-1zM492 459h1v1h-1zM492 446h1v1h-1zM492 432h1v1h-1zM492 418h1v1h-1zM492 405h1v1h-1zM492 391h1v1h-1zM492 377h1v1h-1zM492 364h1v1h-1zM492 350h1v1h-1zM492 337h1v1h-1zM492 323h1v1h-1zM492 309h1v1h-1zM492 296h1v1h-1zM492 282h1v1h-1zM492 268h1v1h-1zM492 255h1v1h-1zM492 241h1v1h-1zM492 227h1v1h-1zM492 214h1v1h-1zM492 200h1v1h-1zM492 186h1v1h-1zM492 173h1v1h-1zM492 159h1v1h-1zM506 719h1v1h-1zM506 705h1v1h-1zM506 691h1v1h-1zM506 678h1v1h-1zM506 664h1v1h-1zM506 650h1v1h-1zM506 637h1v1h-1zM506 623h1v1h-1zM506 609h1v1h-1zM506 596h1v1h-1zM506 582h1v1h-1zM506 568h1v1h-1zM506 555h1v1h-1zM506 541h1v1h-1zM506 528h1v1h-1zM506 514h1v1h-1zM506 500h1v1h-1zM506 487h1v1h-1zM506 473h1v1h-1zM506 459h1v1h-1zM506 446h1v1h-1zM506 432h1v1h-1zM506 418h1v1h-1zM506 405h1v1h-1zM506 391h1v1h-1zM506 377h1v1h-1zM506 364h1v1h-1zM506 350h1v1h-1zM506 337h1v1h-1zM506 323h1v1h-1zM506 309h1v1h-1zM506 296h1v1h-1zM506 282h1v1h-1zM506 268h1v1h-1zM506 255h1v1h-1zM506 241h1v1h-1zM506 227h1v1h-1zM506 214h1v1h-1zM506 200h1v1h-1zM506 186h1v1h-1zM506 173h1v1h-1zM506 159h1v1h-1zM519 719h1v1h-1zM519 705h1v1h-1zM519 691h1v1h-1zM519 678h1v1h-1zM519 664h1v1h-1zM519 650h1v1h-1zM519 637h1v1h-1zM519 623h1v1h-1zM519 609h1v1h-1zM519 596h1v1h-1zM519 582h1v1h-1zM519 568h1v1h-1zM519 555h1v1h-1zM519 541h1v1h-1zM519 528h1v1h-1zM519 514h1v1h-1zM519 500h1v1h-1zM519 487h1v1h-1zM519 473h1v1h-1zM519 459h1v1h-1zM519 446h1v1h-1zM519 432h1v1h-1zM519 418h1v1h-1zM519 405h1v1h-1zM519 391h1v1h-1zM519 377h1v1h-1zM519 364h1v1h-1zM519 350h1v1h-1zM519 337h1v1h-1zM519 323h1v1h-1zM519 309h1v1h-1zM519 296h1v1h-1zM519 282h1v1h-1zM519 268h1v1h-1zM519 255h1v1h-1zM519 241h1v1h-1zM519 227h1v1h-1zM519 214h1v1h-1zM519 200h1v1h-1zM519 186h1v1h-1zM519 173h1v1h-1zM519 159h1v1h-1zM533 719h1v1h-1zM533 705h1v1h-1zM533 691h1v1h-1zM533 678h1v1h-1zM533 664h1v1h-1zM533 650h1v1h-1zM533 637h1v1h-1zM533 623h1v1h-1zM533 609h1v1h-1zM533 596h1v1h-1zM533 582h1v1h-1zM533 568h1v1h-1zM533 555h1v1h-1zM533 541h1v1h-1zM533 528h1v1h-1zM533 514h1v1h-1zM533 500h1v1h-1zM533 487h1v1h-1zM533 473h1v1h-1zM533 459h1v1h-1zM533 446h1v1h-1zM533 432h1v1h-1zM533 418h1v1h-1zM533 405h1v1h-1zM533 391h1v1h-1zM533 377h1v1h-1zM533 364h1v1h-1zM533 350h1v1h-1zM533 337h1v1h-1zM533 323h1v1h-1zM533 309h1v1h-1zM533 296h1v1h-1zM533 282h1v1h-1zM533 268h1v1h-1zM533 255h1v1h-1zM533 241h1v1h-1zM533 227h1v1h-1zM533 214h1v1h-1zM533 200h1v1h-1zM533 186h1v1h-1zM533 173h1v1h-1zM533 159h1v1h-1zM547 719h1v1h-1zM547 705h1v1h-1zM547 691h1v1h-1zM547 678h1v1h-1zM547 664h1v1h-1zM547 650h1v1h-1zM547 637h1v1h-1zM547 623h1v1h-1zM547 609h1v1h-1zM547 596h1v1h-1zM547 582h1v1h-1zM547 568h1v1h-1zM547 555h1v1h-1zM547 541h1v1h-1zM547 528h1v1h-1zM547 514h1v1h-1zM547 500h1v1h-1zM547 487h1v1h-1zM547 473h1v1h-1zM547 459h1v1h-1zM547 446h1v1h-1zM547 432h1v1h-1zM547 418h1v1h-1zM547 405h1v1h-1zM547 391h1v1h-1zM547 377h1v1h-1zM547 364h1v1h-1zM547 350h1v1h-1zM547 337h1v1h-1zM547 323h1v1h-1zM547 309h1v1h-1zM547 296h1v1h-1zM547 282h1v1h-1zM547 268h1v1h-1zM547 255h1v1h-1zM547 241h1v1h-1zM547 227h1v1h-1zM547 214h1v1h-1zM547 200h1v1h-1zM547 186h1v1h-1zM547 173h1v1h-1zM547 159h1v1h-1zM560 719h1v1h-1zM560 705h1v1h-1zM560 691h1v1h-1zM560 678h1v1h-1zM560 664h1v1h-1zM560 650h1v1h-1zM560 637h1v1h-1zM560 623h1v1h-1zM560 609h1v1h-1zM560 596h1v1h-1zM560 582h1v1h-1zM560 568h1v1h-1zM560 555h1v1h-1zM560 541h1v1h-1zM560 528h1v1h-1zM560 514h1v1h-1zM560 500h1v1h-1zM560 487h1v1h-1zM560 473h1v1h-1zM560 459h1v1h-1zM560 446h1v1h-1zM560 432h1v1h-1zM560 418h1v1h-1zM560 405h1v1h-1zM560 391h1v1h-1zM560 377h1v1h-1zM560 364h1v1h-1zM560 350h1v1h-1zM560 337h1v1h-1zM560 323h1v1h-1zM560 309h1v1h-1zM560 296h1v1h-1zM560 282h1v1h-1zM560 268h1v1h-1zM560 255h1v1h-1zM560 241h1v1h-1zM560 227h1v1h-1zM560 214h1v1h-1zM560 200h1v1h-1zM560 186h1v1h-1zM560 173h1v1h-1zM560 159h1v1h-1zM574 719h1v1h-1zM574 705h1v1h-1zM574 691h1v1h-1zM574 678h1v1h-1zM574 664h1v1h-1zM574 650h1v1h-1zM574 637h1v1h-1zM574 623h1v1h-1zM574 609h1v1h-1zM574 596h1v1h-1zM574 582h1v1h-1zM574 568h1v1h-1zM574 555h1v1h-1zM574 541h1v1h-1zM574 528h1v1h-1zM574 514h1v1h-1zM574 500h1v1h-1zM574 487h1v1h-1zM574 473h1v1h-1zM574 459h1v1h-1zM574 446h1v1h-1zM574 432h1v1h-1zM574 418h1v1h-1zM574 405h1v1h-1zM574 391h1v1h-1zM574 377h1v1h-1zM574 364h1v1h-1zM574 350h1v1h-1zM574 337h1v1h-1zM574 323h1v1h-1zM574 309h1v1h-1zM574 296h1v1h-1zM574 282h1v1h-1zM574 268h1v1h-1zM574 255h1v1h-1zM574 241h1v1h-1zM574 227h1v1h-1zM574 214h1v1h-1zM574 200h1v1h-1zM574 186h1v1h-1zM574 173h1v1h-1zM574 159h1v1h-1zM588 719h1v1h-1zM588 705h1v1h-1zM588 691h1v1h-1zM588 678h1v1h-1zM588 664h1v1h-1zM588 650h1v1h-1zM588 637h1v1h-1zM588 623h1v1h-1zM588 609h1v1h-1zM588 596h1v1h-1zM588 582h1v1h-1zM588 568h1v1h-1zM588 555h1v1h-1zM588 541h1v1h-1zM588 528h1v1h-1zM588 514h1v1h-1zM588 500h1v1h-1zM588 487h1v1h-1zM588 473h1v1h-1zM588 459h1v1h-1zM588 446h1v1h-1zM588 432h1v1h-1zM588 418h1v1h-1zM588 405h1v1h-1zM588 391h1v1h-1zM588 377h1v1h-1zM588 364h1v1h-1zM588 350h1v1h-1zM588 337h1v1h-1zM588 323h1v1h-1zM588 309h1v1h-1zM588 296h1v1h-1zM588 282h1v1h-1zM588 268h1v1h-1zM588 255h1v1h-1zM588 241h1v1h-1zM588 227h1v1h-1zM588 214h1v1h-1zM588 200h1v1h-1zM588 186h1v1h-1zM588 173h1v1h-1zM588 159h1v1h-1zM601 719h1v1h-1zM601 705h1v1h-1zM601 691h1v1h-1zM601 678h1v1h-1zM601 664h1v1h-1zM601 650h1v1h-1zM601 637h1v1h-1zM601 623h1v1h-1zM601 609h1v1h-1zM601 596h1v1h-1zM601 582h1v1h-1zM601 568h1v1h-1zM601 555h1v1h-1zM601 541h1v1h-1zM601 528h1v1h-1zM601 514h1v1h-1zM601 500h1v1h-1zM601 487h1v1h-1zM601 473h1v1h-1zM601 459h1v1h-1zM601 446h1v1h-1zM601 432h1v1h-1zM601 418h1v1h-1zM601 405h1v1h-1zM601 391h1v1h-1zM601 377h1v1h-1zM601 364h1v1h-1zM601 350h1v1h-1zM601 337h1v1h-1zM601 323h1v1h-1zM601 309h1v1h-1zM601 296h1v1h-1zM601 282h1v1h-1zM601 268h1v1h-1zM601 255h1v1h-1zM601 241h1v1h-1zM601 227h1v1h-1zM601 214h1v1h-1zM601 200h1v1h-1zM601 186h1v1h-1zM601 173h1v1h-1zM601 159h1v1h-1zM615 719h1v1h-1zM615 705h1v1h-1zM615 691h1v1h-1zM615 678h1v1h-1zM615 664h1v1h-1zM615 650h1v1h-1zM615 637h1v1h-1zM615 623h1v1h-1zM615 609h1v1h-1zM615 596h1v1h-1zM615 582h1v1h-1zM615 568h1v1h-1zM615 555h1v1h-1zM615 541h1v1h-1zM615 528h1v1h-1zM615 514h1v1h-1zM615 500h1v1h-1zM615 487h1v1h-1zM615 473h1v1h-1zM615 459h1v1h-1zM615 446h1v1h-1zM615 432h1v1h-1zM615 418h1v1h-1zM615 405h1v1h-1zM615 391h1v1h-1zM615 377h1v1h-1zM615 364h1v1h-1zM615 350h1v1h-1zM615 337h1v1h-1zM615 323h1v1h-1zM615 309h1v1h-1zM615 296h1v1h-1zM615 282h1v1h-1zM615 268h1v1h-1zM615 255h1v1h-1zM615 241h1v1h-1zM615 227h1v1h-1zM615 214h1v1h-1zM615 200h1v1h-1zM615 186h1v1h-1zM615 173h1v1h-1zM615 159h1v1h-1zM629 719h1v1h-1zM629 705h1v1h-1zM629 691h1v1h-1zM629 678h1v1h-1zM629 664h1v1h-1zM629 650h1v1h-1zM629 637h1v1h-1zM629 623h1v1h-1zM629 609h1v1h-1zM629 596h1v1h-1zM629 582h1v1h-1zM629 568h1v1h-1zM629 555h1v1h-1zM629 541h1v1h-1zM629 528h1v1h-1zM629 514h1v1h-1zM629 500h1v1h-1zM629 487h1v1h-1zM629 473h1v1h-1zM629 459h1v1h-1zM629 446h1v1h-1zM629 432h1v1h-1zM629 418h1v1h-1zM629 405h1v1h-1zM629 391h1v1h-1zM629 377h1v1h-1zM629 364h1v1h-1zM629 350h1v1h-1zM629 337h1v1h-1zM629 323h1v1h-1zM629 309h1v1h-1zM629 296h1v1h-1zM629 282h1v1h-1zM629 268h1v1h-1zM629 255h1v1h-1zM629 241h1v1h-1zM629 227h1v1h-1zM629 214h1v1h-1zM629 200h1v1h-1zM629 186h1v1h-1zM629 173h1v1h-1zM629 159h1v1h-1zM642 719h1v1h-1zM642 705h1v1h-1zM642 691h1v1h-1zM642 678h1v1h-1zM642 664h1v1h-1zM642 650h1v1h-1zM642 637h1v1h-1zM642 623h1v1h-1zM642 609h1v1h-1zM642 596h1v1h-1zM642 582h1v1h-1zM642 568h1v1h-1zM642 555h1v1h-1zM642 541h1v1h-1zM642 528h1v1h-1zM642 514h1v1h-1zM642 500h1v1h-1zM642 487h1v1h-1zM642 473h1v1h-1zM642 459h1v1h-1zM642 446h1v1h-1zM642 432h1v1h-1zM642 418h1v1h-1zM642 405h1v1h-1zM642 391h1v1h-1zM642 377h1v1h-1zM642 364h1v1h-1zM642 350h1v1h-1zM642 337h1v1h-1zM642 323h1v1h-1zM642 309h1v1h-1zM642 296h1v1h-1zM642 282h1v1h-1zM642 268h1v1h-1zM642 255h1v1h-1zM642 241h1v1h-1zM642 227h1v1h-1zM642 214h1v1h-1zM642 200h1v1h-1zM642 186h1v1h-1zM642 173h1v1h-1zM642 159h1v1h-1zM656 719h1v1h-1zM656 705h1v1h-1zM656 691h1v1h-1zM656 678h1v1h-1zM656 664h1v1h-1zM656 650h1v1h-1zM656 637h1v1h-1zM656 623h1v1h-1zM656 609h1v1h-1zM656 596h1v1h-1zM656 582h1v1h-1zM656 568h1v1h-1zM656 555h1v1h-1zM656 541h1v1h-1zM656 528h1v1h-1zM656 514h1v1h-1zM656 500h1v1h-1zM656 487h1v1h-1zM656 473h1v1h-1zM656 459h1v1h-1zM656 446h1v1h-1zM656 432h1v1h-1zM656 418h1v1h-1zM656 405h1v1h-1zM656 391h1v1h-1zM656 377h1v1h-1zM656 364h1v1h-1zM656 350h1v1h-1zM656 337h1v1h-1zM656 323h1v1h-1zM656 309h1v1h-1zM656 296h1v1h-1zM656 282h1v1h-1zM656 268h1v1h-1zM656 255h1v1h-1zM656 241h1v1h-1zM656 227h1v1h-1zM656 214h1v1h-1zM656 200h1v1h-1zM656 186h1v1h-1zM656 173h1v1h-1zM656 159h1v1h-1zM670 719h1v1h-1zM670 705h1v1h-1zM670 691h1v1h-1zM670 678h1v1h-1zM670 664h1v1h-1zM670 650h1v1h-1zM670 637h1v1h-1zM670 623h1v1h-1zM670 609h1v1h-1zM670 596h1v1h-1zM670 582h1v1h-1zM670 568h1v1h-1zM670 555h1v1h-1zM670 541h1v1h-1zM670 528h1v1h-1zM670 514h1v1h-1zM670 500h1v1h-1zM670 487h1v1h-1zM670 473h1v1h-1zM670 459h1v1h-1zM670 446h1v1h-1zM670 432h1v1h-1zM670 418h1v1h-1zM670 405h1v1h-1zM670 391h1v1h-1zM670 377h1v1h-1zM670 364h1v1h-1zM670 350h1v1h-1zM670 337h1v1h-1zM670 323h1v1h-1zM670 309h1v1h-1zM670 296h1v1h-1zM670 282h1v1h-1zM670 268h1v1h-1zM670 255h1v1h-1zM670 241h1v1h-1zM670 227h1v1h-1zM670 214h1v1h-1zM670 200h1v1h-1zM670 186h1v1h-1zM670 173h1v1h-1zM670 159h1v1h-1zM683 719h1v1h-1zM683 705h1v1h-1zM683 691h1v1h-1zM683 678h1v1h-1zM683 664h1v1h-1zM683 650h1v1h-1zM683 637h1v1h-1zM683 623h1v1h-1zM683 609h1v1h-1zM683 596h1v1h-1zM683 582h1v1h-1zM683 568h1v1h-1zM683 555h1v1h-1zM683 541h1v1h-1zM683 528h1v1h-1zM683 514h1v1h-1zM683 500h1v1h-1zM683 487h1v1h-1zM683 473h1v1h-1zM683 459h1v1h-1zM683 446h1v1h-1zM683 432h1v1h-1zM683 418h1v1h-1zM683 405h1v1h-1zM683 391h1v1h-1zM683 377h1v1h-1zM683 364h1v1h-1zM683 350h1v1h-1zM683 337h1v1h-1zM683 323h1v1h-1zM683 309h1v1h-1zM683 296h1v1h-1zM683 282h1v1h-1zM683 268h1v1h-1zM683 255h1v1h-1zM683 241h1v1h-1zM683 227h1v1h-1zM683 214h1v1h-1zM683 200h1v1h-1zM683 186h1v1h-1zM683 173h1v1h-1zM683 159h1v1h-1zM697 719h1v1h-1zM697 705h1v1h-1zM697 691h1v1h-1zM697 678h1v1h-1zM697 664h1v1h-1zM697 650h1v1h-1zM697 637h1v1h-1zM697 623h1v1h-1zM697 609h1v1h-1zM697 596h1v1h-1zM697 582h1v1h-1zM697 568h1v1h-1zM697 555h1v1h-1zM697 541h1v1h-1zM697 528h1v1h-1zM697 514h1v1h-1zM697 500h1v1h-1zM697 487h1v1h-1zM697 473h1v1h-1zM697 459h1v1h-1zM697 446h1v1h-1zM697 432h1v1h-1zM697 418h1v1h-1zM697 405h1v1h-1zM697 391h1v1h-1zM697 377h1v1h-1zM697 364h1v1h-1zM697 350h1v1h-1zM697 337h1v1h-1zM697 323h1v1h-1zM697 309h1v1h-1zM697 296h1v1h-1zM697 282h1v1h-1zM697 268h1v1h-1zM697 255h1v1h-1zM697 241h1v1h-1zM697 227h1v1h-1zM697 214h1v1h-1zM697 200h1v1h-1zM697 186h1v1h-1zM697 173h1v1h-1zM697 159h1v1h-1zM710 719h1v1h-1zM710 705h1v1h-1zM710 691h1v1h-1zM710 678h1v1h-1zM710 664h1v1h-1zM710 650h1v1h-1zM710 637h1v1h-1zM710 623h1v1h-1zM710 609h1v1h-1zM710 596h1v1h-1zM710 582h1v1h-1zM710 568h1v1h-1zM710 555h1v1h-1zM710 541h1v1h-1zM710 528h1v1h-1zM710 514h1v1h-1zM710 500h1v1h-1zM710 487h1v1h-1zM710 473h1v1h-1zM710 459h1v1h-1zM710 446h1v1h-1zM710 432h1v1h-1zM710 418h1v1h-1zM710 405h1v1h-1zM710 391h1v1h-1zM710 377h1v1h-1zM710 364h1v1h-1zM710 350h1v1h-1zM710 337h1v1h-1zM710 323h1v1h-1zM710 309h1v1h-1zM710 296h1v1h-1zM710 282h1v1h-1zM710 268h1v1h-1zM710 255h1v1h-1zM710 241h1v1h-1zM710 227h1v1h-1zM710 214h1v1h-1zM710 200h1v1h-1zM710 186h1v1h-1zM710 173h1v1h-1zM710 159h1v1h-1zM724 719h1v1h-1zM724 705h1v1h-1zM724 691h1v1h-1zM724 678h1v1h-1zM724 664h1v1h-1zM724 650h1v1h-1zM724 637h1v1h-1zM724 623h1v1h-1zM724 609h1v1h-1zM724 596h1v1h-1zM724 582h1v1h-1zM724 568h1v1h-1zM724 555h1v1h-1zM724 541h1v1h-1zM724 528h1v1h-1zM724 514h1v1h-1zM724 500h1v1h-1zM724 487h1v1h-1zM724 473h1v1h-1zM724 459h1v1h-1zM724 446h1v1h-1zM724 432h1v1h-1zM724 418h1v1h-1zM724 405h1v1h-1zM724 391h1v1h-1zM724 377h1v1h-1zM724 364h1v1h-1zM724 350h1v1h-1zM724 337h1v1h-1zM724 323h1v1h-1zM724 309h1v1h-1zM724 296h1v1h-1zM724 282h1v1h-1zM724 268h1v1h-1zM724 255h1v1h-1zM724 241h1v1h-1zM724 227h1v1h-1zM724 214h1v1h-1zM724 200h1v1h-1zM724 186h1v1h-1zM724 173h1v1h-1zM724 159h1v1h-1zM738 719h1v1h-1zM738 705h1v1h-1zM738 691h1v1h-1zM738 678h1v1h-1zM738 664h1v1h-1zM738 650h1v1h-1zM738 637h1v1h-1zM738 623h1v1h-1zM738 609h1v1h-1zM738 596h1v1h-1zM738 582h1v1h-1zM738 568h1v1h-1zM738 555h1v1h-1zM738 541h1v1h-1zM738 528h1v1h-1zM738 514h1v1h-1zM738 500h1v1h-1zM738 487h1v1h-1zM738 473h1v1h-1zM738 459h1v1h-1zM738 446h1v1h-1zM738 432h1v1h-1zM738 418h1v1h-1zM738 405h1v1h-1zM738 391h1v1h-1zM738 377h1v1h-1zM738 364h1v1h-1zM738 350h1v1h-1zM738 337h1v1h-1zM738 323h1v1h-1zM738 309h1v1h-1zM738 296h1v1h-1zM738 282h1v1h-1zM738 268h1v1h-1zM738 255h1v1h-1zM738 241h1v1h-1zM738 227h1v1h-1zM738 214h1v1h-1zM738 200h1v1h-1zM738 186h1v1h-1zM738 173h1v1h-1zM738 159h1v1h-1zM751 719h1v1h-1zM751 705h1v1h-1zM751 691h1v1h-1zM751 678h1v1h-1zM751 664h1v1h-1zM751 650h1v1h-1zM751 637h1v1h-1zM751 623h1v1h-1zM751 609h1v1h-1zM751 596h1v1h-1zM751 582h1v1h-1zM751 568h1v1h-1zM751 555h1v1h-1zM751 541h1v1h-1zM751 528h1v1h-1zM751 514h1v1h-1zM751 500h1v1h-1zM751 487h1v1h-1zM751 473h1v1h-1zM751 459h1v1h-1zM751 446h1v1h-1zM751 432h1v1h-1zM751 418h1v1h-1zM751 405h1v1h-1zM751 391h1v1h-1zM751 377h1v1h-1zM751 364h1v1h-1zM751 350h1v1h-1zM751 337h1v1h-1zM751 323h1v1h-1zM751 309h1v1h-1zM751 296h1v1h-1zM751 282h1v1h-1zM751 268h1v1h-1zM751 255h1v1h-1zM751 241h1v1h-1zM751 227h1v1h-1zM751 214h1v1h-1zM751 200h1v1h-1zM751 186h1v1h-1zM751 173h1v1h-1zM751 159h1v1h-1zM765 719h1v1h-1zM765 705h1v1h-1zM765 691h1v1h-1zM765 678h1v1h-1zM765 664h1v1h-1zM765 650h1v1h-1zM765 637h1v1h-1zM765 623h1v1h-1zM765 609h1v1h-1zM765 596h1v1h-1zM765 582h1v1h-1zM765 568h1v1h-1zM765 555h1v1h-1zM765 541h1v1h-1zM765 528h1v1h-1zM765 514h1v1h-1zM765 500h1v1h-1zM765 487h1v1h-1zM765 473h1v1h-1zM765 459h1v1h-1zM765 446h1v1h-1zM765 432h1v1h-1zM765 418h1v1h-1zM765 405h1v1h-1zM765 391h1v1h-1zM765 377h1v1h-1zM765 364h1v1h-1zM765 350h1v1h-1zM765 337h1v1h-1zM765 323h1v1h-1zM765 309h1v1h-1zM765 296h1v1h-1zM765 282h1v1h-1zM765 268h1v1h-1zM765 255h1v1h-1zM765 241h1v1h-1zM765 227h1v1h-1zM765 214h1v1h-1zM765 200h1v1h-1zM765 186h1v1h-1zM765 173h1v1h-1zM765 159h1v1h-1zM779 719h1v1h-1zM779 705h1v1h-1zM779 691h1v1h-1zM779 678h1v1h-1zM779 664h1v1h-1zM779 650h1v1h-1zM779 637h1v1h-1zM779 623h1v1h-1zM779 609h1v1h-1zM779 596h1v1h-1zM779 582h1v1h-1zM779 568h1v1h-1zM779 555h1v1h-1zM779 541h1v1h-1zM779 528h1v1h-1zM779 514h1v1h-1zM779 500h1v1h-1zM779 487h1v1h-1zM779 473h1v1h-1zM779 459h1v1h-1zM779 446h1v1h-1zM779 432h1v1h-1zM779 418h1v1h-1zM779 405h1v1h-1zM779 391h1v1h-1zM779 377h1v1h-1zM779 364h1v1h-1zM779 350h1v1h-1zM779 337h1v1h-1zM779 323h1v1h-1zM779 309h1v1h-1zM779 296h1v1h-1zM779 282h1v1h-1zM779 268h1v1h-1zM779 255h1v1h-1zM779 241h1v1h-1zM779 227h1v1h-1zM779 214h1v1h-1zM779 200h1v1h-1zM779 186h1v1h-1zM779 173h1v1h-1zM779 159h1v1h-1zM792 719h1v1h-1zM792 705h1v1h-1zM792 691h1v1h-1zM792 678h1v1h-1zM792 664h1v1h-1zM792 650h1v1h-1zM792 637h1v1h-1zM792 623h1v1h-1zM792 609h1v1h-1zM792 596h1v1h-1zM792 582h1v1h-1zM792 568h1v1h-1zM792 555h1v1h-1zM792 541h1v1h-1zM792 528h1v1h-1zM792 514h1v1h-1zM792 500h1v1h-1zM792 487h1v1h-1zM792 473h1v1h-1zM792 459h1v1h-1zM792 446h1v1h-1zM792 432h1v1h-1zM792 418h1v1h-1zM792 405h1v1h-1zM792 391h1v1h-1zM792 377h1v1h-1zM792 364h1v1h-1zM792 350h1v1h-1zM792 337h1v1h-1zM792 323h1v1h-1zM792 309h1v1h-1zM792 296h1v1h-1zM792 282h1v1h-1zM792 268h1v1h-1zM792 255h1v1h-1zM792 241h1v1h-1zM792 227h1v1h-1zM792 214h1v1h-1zM792 200h1v1h-1zM792 186h1v1h-1zM792 173h1v1h-1zM792 159h1v1h-1zM806 719h1v1h-1zM806 705h1v1h-1zM806 691h1v1h-1zM806 678h1v1h-1zM806 664h1v1h-1zM806 650h1v1h-1zM806 637h1v1h-1zM806 623h1v1h-1zM806 609h1v1h-1zM806 596h1v1h-1zM806 582h1v1h-1zM806 568h1v1h-1zM806 555h1v1h-1zM806 541h1v1h-1zM806 528h1v1h-1zM806 514h1v1h-1zM806 500h1v1h-1zM806 487h1v1h-1zM806 473h1v1h-1zM806 459h1v1h-1zM806 446h1v1h-1zM806 432h1v1h-1zM806 418h1v1h-1zM806 405h1v1h-1zM806 391h1v1h-1zM806 377h1v1h-1zM806 364h1v1h-1zM806 350h1v1h-1zM806 337h1v1h-1zM806 323h1v1h-1zM806 309h1v1h-1zM806 296h1v1h-1zM806 282h1v1h-1zM806 268h1v1h-1zM806 255h1v1h-1zM806 241h1v1h-1zM806 227h1v1h-1zM806 214h1v1h-1zM806 200h1v1h-1zM806 186h1v1h-1zM806 173h1v1h-1zM806 159h1v1h-1zM820 719h1v1h-1zM820 705h1v1h-1zM820 691h1v1h-1zM820 678h1v1h-1zM820 664h1v1h-1zM820 650h1v1h-1zM820 637h1v1h-1zM820 623h1v1h-1zM820 609h1v1h-1zM820 596h1v1h-1zM820 582h1v1h-1zM820 568h1v1h-1zM820 555h1v1h-1zM820 541h1v1h-1zM820 528h1v1h-1zM820 514h1v1h-1zM820 500h1v1h-1zM820 487h1v1h-1zM820 473h1v1h-1zM820 459h1v1h-1zM820 446h1v1h-1zM820 432h1v1h-1zM820 418h1v1h-1zM820 405h1v1h-1zM820 391h1v1h-1zM820 377h1v1h-1zM820 364h1v1h-1zM820 350h1v1h-1zM820 337h1v1h-1zM820 323h1v1h-1zM820 309h1v1h-1zM820 296h1v1h-1zM820 282h1v1h-1zM820 268h1v1h-1zM820 255h1v1h-1zM820 241h1v1h-1zM820 227h1v1h-1zM820 214h1v1h-1zM820 200h1v1h-1zM820 186h1v1h-1zM820 173h1v1h-1zM820 159h1v1h-1zM833 719h1v1h-1zM833 705h1v1h-1zM833 691h1v1h-1zM833 678h1v1h-1zM833 664h1v1h-1zM833 650h1v1h-1zM833 637h1v1h-1zM833 623h1v1h-1zM833 609h1v1h-1zM833 596h1v1h-1zM833 582h1v1h-1zM833 568h1v1h-1zM833 555h1v1h-1zM833 541h1v1h-1zM833 528h1v1h-1zM833 514h1v1h-1zM833 500h1v1h-1zM833 487h1v1h-1zM833 473h1v1h-1zM833 459h1v1h-1zM833 446h1v1h-1zM833 432h1v1h-1zM833 418h1v1h-1zM833 405h1v1h-1zM833 391h1v1h-1zM833 377h1v1h-1zM833 364h1v1h-1zM833 350h1v1h-1zM833 337h1v1h-1zM833 323h1v1h-1zM833 309h1v1h-1zM833 296h1v1h-1zM833 282h1v1h-1zM833 268h1v1h-1zM833 255h1v1h-1zM833 241h1v1h-1zM833 227h1v1h-1zM833 214h1v1h-1zM833 200h1v1h-1zM833 186h1v1h-1zM833 173h1v1h-1zM833 159h1v1h-1zM847 719h1v1h-1zM847 705h1v1h-1zM847 691h1v1h-1zM847 678h1v1h-1zM847 664h1v1h-1zM847 650h1v1h-1zM847 637h1v1h-1zM847 623h1v1h-1zM847 609h1v1h-1zM847 596h1v1h-1zM847 582h1v1h-1zM847 568h1v1h-1zM847 555h1v1h-1zM847 541h1v1h-1zM847 528h1v1h-1zM847 514h1v1h-1zM847 500h1v1h-1zM847 487h1v1h-1zM847 473h1v1h-1zM847 459h1v1h-1zM847 446h1v1h-1zM847 432h1v1h-1zM847 418h1v1h-1zM847 405h1v1h-1zM847 391h1v1h-1zM847 377h1v1h-1zM847 364h1v1h-1zM847 350h1v1h-1zM847 337h1v1h-1zM847 323h1v1h-1zM847 309h1v1h-1zM847 296h1v1h-1zM847 282h1v1h-1zM847 268h1v1h-1zM847 255h1v1h-1zM847 241h1v1h-1zM847 227h1v1h-1zM847 214h1v1h-1zM847 200h1v1h-1zM847 186h1v1h-1zM847 173h1v1h-1zM847 159h1v1h-1zM861 719h1v1h-1zM861 705h1v1h-1zM861 691h1v1h-1zM861 678h1v1h-1zM861 664h1v1h-1zM861 650h1v1h-1zM861 637h1v1h-1zM861 623h1v1h-1zM861 609h1v1h-1zM861 596h1v1h-1zM861 582h1v1h-1zM861 568h1v1h-1zM861 555h1v1h-1zM861 541h1v1h-1zM861 528h1v1h-1zM861 514h1v1h-1zM861 500h1v1h-1zM861 487h1v1h-1zM861 473h1v1h-1zM861 459h1v1h-1zM861 446h1v1h-1zM861 432h1v1h-1zM861 418h1v1h-1zM861 405h1v1h-1zM861 391h1v1h-1zM861 377h1v1h-1zM861 364h1v1h-1zM861 350h1v1h-1zM861 337h1v1h-1zM861 323h1v1h-1zM861 309h1v1h-1zM861 296h1v1h-1zM861 282h1v1h-1zM861 268h1v1h-1zM861 255h1v1h-1zM861 241h1v1h-1zM861 227h1v1h-1zM861 214h1v1h-1zM861 200h1v1h-1zM861 186h1v1h-1zM861 173h1v1h-1zM861 159h1v1h-1zM874 719h1v1h-1zM874 705h1v1h-1zM874 691h1v1h-1zM874 678h1v1h-1zM874 664h1v1h-1zM874 650h1v1h-1zM874 637h1v1h-1zM874 623h1v1h-1zM874 609h1v1h-1zM874 596h1v1h-1zM874 582h1v1h-1zM874 568h1v1h-1zM874 555h1v1h-1zM874 541h1v1h-1zM874 528h1v1h-1zM874 514h1v1h-1zM874 500h1v1h-1zM874 487h1v1h-1zM874 473h1v1h-1zM874 459h1v1h-1zM874 446h1v1h-1zM874 432h1v1h-1zM874 418h1v1h-1zM874 405h1v1h-1zM874 391h1v1h-1zM874 377h1v1h-1zM874 364h1v1h-1zM874 350h1v1h-1zM874 337h1v1h-1zM874 323h1v1h-1zM874 309h1v1h-1zM874 296h1v1h-1zM874 282h1v1h-1zM874 268h1v1h-1zM874 255h1v1h-1zM874 241h1v1h-1zM874 227h1v1h-1zM874 214h1v1h-1zM874 200h1v1h-1zM874 186h1v1h-1zM874 173h1v1h-1zM874 159h1v1h-1zM888 719h1v1h-1zM888 705h1v1h-1zM888 691h1v1h-1zM888 678h1v1h-1zM888 664h1v1h-1zM888 650h1v1h-1zM888 637h1v1h-1zM888 623h1v1h-1zM888 609h1v1h-1zM888 596h1v1h-1zM888 582h1v1h-1zM888 568h1v1h-1zM888 555h1v1h-1zM888 541h1v1h-1zM888 528h1v1h-1zM888 514h1v1h-1zM888 500h1v1h-1zM888 487h1v1h-1zM888 473h1v1h-1zM888 459h1v1h-1zM888 446h1v1h-1zM888 432h1v1h-1zM888 418h1v1h-1zM888 405h1v1h-1zM888 391h1v1h-1zM888 377h1v1h-1zM888 364h1v1h-1zM888 350h1v1h-1zM888 337h1v1h-1zM888 323h1v1h-1zM888 309h1v1h-1zM888 296h1v1h-1zM888 282h1v1h-1zM888 268h1v1h-1zM888 255h1v1h-1zM888 241h1v1h-1zM888 227h1v1h-1zM888 214h1v1h-1zM888 200h1v1h-1zM888 186h1v1h-1zM888 173h1v1h-1zM888 159h1v1h-1zM901 719h1v1h-1zM901 705h1v1h-1zM901 691h1v1h-1zM901 678h1v1h-1zM901 664h1v1h-1zM901 650h1v1h-1zM901 637h1v1h-1zM901 623h1v1h-1zM901 609h1v1h-1zM901 596h1v1h-1zM901 582h1v1h-1zM901 568h1v1h-1zM901 555h1v1h-1zM901 541h1v1h-1zM901 528h1v1h-1zM901 514h1v1h-1zM901 500h1v1h-1zM901 487h1v1h-1zM901 473h1v1h-1zM901 459h1v1h-1zM901 446h1v1h-1zM901 432h1v1h-1zM901 418h1v1h-1zM901 405h1v1h-1zM901 391h1v1h-1zM901 377h1v1h-1zM901 364h1v1h-1zM901 350h1v1h-1zM901 337h1v1h-1zM901 323h1v1h-1zM901 309h1v1h-1zM901 296h1v1h-1zM901 282h1v1h-1zM901 268h1v1h-1zM901 255h1v1h-1zM901 241h1v1h-1zM901 227h1v1h-1zM901 214h1v1h-1zM901 200h1v1h-1zM901 186h1v1h-1zM901 173h1v1h-1zM901 159h1v1h-1zM915 719h1v1h-1zM915 705h1v1h-1zM915 691h1v1h-1zM915 678h1v1h-1zM915 664h1v1h-1zM915 650h1v1h-1zM915 637h1v1h-1zM915 623h1v1h-1zM915 609h1v1h-1zM915 596h1v1h-1zM915 582h1v1h-1zM915 568h1v1h-1zM915 555h1v1h-1zM915 541h1v1h-1zM915 528h1v1h-1zM915 514h1v1h-1zM915 500h1v1h-1zM915 487h1v1h-1zM915 473h1v1h-1zM915 459h1v1h-1zM915 446h1v1h-1zM915 432h1v1h-1zM915 418h1v1h-1zM915 405h1v1h-1zM915 391h1v1h-1zM915 377h1v1h-1zM915 364h1v1h-1zM915 350h1v1h-1zM915 337h1v1h-1zM915 323h1v1h-1zM915 309h1v1h-1zM915 296h1v1h-1zM915 282h1v1h-1zM915 268h1v1h-1zM915 255h1v1h-1zM915 241h1v1h-1zM915 227h1v1h-1zM915 214h1v1h-1zM915 200h1v1h-1zM915 186h1v1h-1zM915 173h1v1h-1zM915 159h1v1h-1zM929 719h1v1h-1zM929 705h1v1h-1zM929 691h1v1h-1zM929 678h1v1h-1zM929 664h1v1h-1zM929 650h1v1h-1zM929 637h1v1h-1zM929 623h1v1h-1zM929 609h1v1h-1zM929 596h1v1h-1zM929 582h1v1h-1zM929 568h1v1h-1zM929 555h1v1h-1zM929 541h1v1h-1zM929 528h1v1h-1zM929 514h1v1h-1zM929 500h1v1h-1zM929 487h1v1h-1zM929 473h1v1h-1zM929 459h1v1h-1zM929 446h1v1h-1zM929 432h1v1h-1zM929 418h1v1h-1zM929 405h1v1h-1zM929 391h1v1h-1zM929 377h1v1h-1zM929 364h1v1h-1zM929 350h1v1h-1zM929 337h1v1h-1zM929 323h1v1h-1zM929 309h1v1h-1zM929 296h1v1h-1zM929 282h1v1h-1zM929 268h1v1h-1zM929 255h1v1h-1zM929 241h1v1h-1zM929 227h1v1h-1zM929 214h1v1h-1zM929 200h1v1h-1zM929 186h1v1h-1zM929 173h1v1h-1zM929 159h1v1h-1zM942 719h1v1h-1zM942 705h1v1h-1zM942 691h1v1h-1zM942 678h1v1h-1zM942 664h1v1h-1zM942 650h1v1h-1zM942 637h1v1h-1zM942 623h1v1h-1zM942 609h1v1h-1zM942 596h1v1h-1zM942 582h1v1h-1zM942 568h1v1h-1zM942 555h1v1h-1zM942 541h1v1h-1zM942 528h1v1h-1zM942 514h1v1h-1zM942 500h1v1h-1zM942 487h1v1h-1zM942 473h1v1h-1zM942 459h1v1h-1zM942 446h1v1h-1zM942 432h1v1h-1zM942 418h1v1h-1zM942 405h1v1h-1zM942 391h1v1h-1zM942 377h1v1h-1zM942 364h1v1h-1zM942 350h1v1h-1zM942 337h1v1h-1zM942 323h1v1h-1zM942 309h1v1h-1zM942 296h1v1h-1zM942 282h1v1h-1zM942 268h1v1h-1zM942 255h1v1h-1zM942 241h1v1h-1zM942 227h1v1h-1zM942 214h1v1h-1zM942 200h1v1h-1zM942 186h1v1h-1zM942 173h1v1h-1zM942 159h1v1h-1zM956 719h1v1h-1zM956 705h1v1h-1zM956 691h1v1h-1zM956 678h1v1h-1zM956 664h1v1h-1zM956 650h1v1h-1zM956 637h1v1h-1zM956 623h1v1h-1zM956 609h1v1h-1zM956 596h1v1h-1zM956 582h1v1h-1zM956 568h1v1h-1zM956 555h1v1h-1zM956 541h1v1h-1zM956 528h1v1h-1zM956 514h1v1h-1zM956 500h1v1h-1zM956 487h1v1h-1zM956 473h1v1h-1zM956 459h1v1h-1zM956 446h1v1h-1zM956 432h1v1h-1zM956 418h1v1h-1zM956 405h1v1h-1zM956 391h1v1h-1zM956 377h1v1h-1zM956 364h1v1h-1zM956 350h1v1h-1zM956 337h1v1h-1zM956 323h1v1h-1zM956 309h1v1h-1zM956 296h1v1h-1zM956 282h1v1h-1zM956 268h1v1h-1zM956 255h1v1h-1zM956 241h1v1h-1zM956 227h1v1h-1zM956 214h1v1h-1zM956 200h1v1h-1zM956 186h1v1h-1zM956 173h1v1h-1zM956 159h1v1h-1zM970 719h1v1h-1zM970 705h1v1h-1zM970 691h1v1h-1zM970 678h1v1h-1zM970 664h1v1h-1zM970 650h1v1h-1zM970 637h1v1h-1zM970 623h1v1h-1zM970 609h1v1h-1zM970 596h1v1h-1zM970 582h1v1h-1zM970 568h1v1h-1zM970 555h1v1h-1zM970 541h1v1h-1zM970 528h1v1h-1zM970 514h1v1h-1zM970 500h1v1h-1zM970 487h1v1h-1zM970 473h1v1h-1zM970 459h1v1h-1zM970 446h1v1h-1zM970 432h1v1h-1zM970 418h1v1h-1zM970 405h1v1h-1zM970 391h1v1h-1zM970 377h1v1h-1zM970 364h1v1h-1zM970 350h1v1h-1zM970 337h1v1h-1zM970 323h1v1h-1zM970 309h1v1h-1zM970 296h1v1h-1zM970 282h1v1h-1zM970 268h1v1h-1zM970 255h1v1h-1zM970 241h1v1h-1zM970 227h1v1h-1zM970 214h1v1h-1zM970 200h1v1h-1zM970 186h1v1h-1zM970 173h1v1h-1zM970 159h1v1h-1zM983 719h1v1h-1zM983 705h1v1h-1zM983 691h1v1h-1zM983 678h1v1h-1zM983 664h1v1h-1zM983 650h1v1h-1zM983 637h1v1h-1zM983 623h1v1h-1zM983 609h1v1h-1zM983 596h1v1h-1zM983 582h1v1h-1zM983 568h1v1h-1zM983 555h1v1h-1zM983 541h1v1h-1zM983 528h1v1h-1zM983 514h1v1h-1zM983 500h1v1h-1zM983 487h1v1h-1zM983 473h1v1h-1zM983 459h1v1h-1zM983 446h1v1h-1zM983 432h1v1h-1zM983 418h1v1h-1zM983 405h1v1h-1zM983 391h1v1h-1zM983 377h1v1h-1zM983 364h1v1h-1zM983 350h1v1h-1zM983 337h1v1h-1zM983 323h1v1h-1zM983 309h1v1h-1zM983 296h1v1h-1zM983 282h1v1h-1zM983 268h1v1h-1zM983 255h1v1h-1zM983 241h1v1h-1zM983 227h1v1h-1zM983 214h1v1h-1zM983 200h1v1h-1zM983 186h1v1h-1zM983 173h1v1h-1zM983 159h1v1h-1zM997 719h1v1h-1zM997 705h1v1h-1zM997 691h1v1h-1zM997 678h1v1h-1zM997 664h1v1h-1zM997 650h1v1h-1zM997 637h1v1h-1zM997 623h1v1h-1zM997 609h1v1h-1zM997 596h1v1h-1zM997 582h1v1h-1zM997 568h1v1h-1zM997 555h1v1h-1zM997 541h1v1h-1zM997 528h1v1h-1zM997 514h1v1h-1zM997 500h1v1h-1zM997 487h1v1h-1zM997 473h1v1h-1zM997 459h1v1h-1zM997 446h1v1h-1zM997 432h1v1h-1zM997 418h1v1h-1zM997 405h1v1h-1zM997 391h1v1h-1zM997 377h1v1h-1zM997 364h1v1h-1zM997 350h1v1h-1zM997 337h1v1h-1zM997 323h1v1h-1zM997 309h1v1h-1zM997 296h1v1h-1zM997 282h1v1h-1zM997 268h1v1h-1zM997 255h1v1h-1zM997 241h1v1h-1zM997 227h1v1h-1zM997 214h1v1h-1zM997 200h1v1h-1zM997 186h1v1h-1zM997 173h1v1h-1zM997 159h1v1h-1zM1011 719h1v1h-1zM1011 705h1v1h-1zM1011 691h1v1h-1zM1011 678h1v1h-1zM1011 664h1v1h-1zM1011 650h1v1h-1zM1011 637h1v1h-1zM1011 623h1v1h-1zM1011 609h1v1h-1zM1011 596h1v1h-1zM1011 582h1v1h-1zM1011 568h1v1h-1zM1011 555h1v1h-1zM1011 541h1v1h-1zM1011 528h1v1h-1zM1011 514h1v1h-1zM1011 500h1v1h-1zM1011 487h1v1h-1zM1011 473h1v1h-1zM1011 459h1v1h-1zM1011 446h1v1h-1zM1011 432h1v1h-1zM1011 418h1v1h-1zM1011 405h1v1h-1zM1011 391h1v1h-1zM1011 377h1v1h-1zM1011 364h1v1h-1zM1011 350h1v1h-1zM1011 337h1v1h-1zM1011 323h1v1h-1zM1011 309h1v1h-1zM1011 296h1v1h-1zM1011 282h1v1h-1zM1011 268h1v1h-1zM1011 255h1v1h-1zM1011 241h1v1h-1zM1011 227h1v1h-1zM1011 214h1v1h-1zM1011 200h1v1h-1zM1011 186h1v1h-1zM1011 173h1v1h-1zM1011 159h1v1h-1zM1024 719h1v1h-1zM1024 705h1v1h-1zM1024 691h1v1h-1zM1024 678h1v1h-1zM1024 664h1v1h-1zM1024 650h1v1h-1zM1024 637h1v1h-1zM1024 623h1v1h-1zM1024 609h1v1h-1zM1024 596h1v1h-1zM1024 582h1v1h-1zM1024 568h1v1h-1zM1024 555h1v1h-1zM1024 541h1v1h-1zM1024 528h1v1h-1zM1024 514h1v1h-1zM1024 500h1v1h-1zM1024 487h1v1h-1zM1024 473h1v1h-1zM1024 459h1v1h-1zM1024 446h1v1h-1zM1024 432h1v1h-1zM1024 418h1v1h-1zM1024 405h1v1h-1zM1024 391h1v1h-1zM1024 377h1v1h-1zM1024 364h1v1h-1zM1024 350h1v1h-1zM1024 337h1v1h-1zM1024 323h1v1h-1zM1024 309h1v1h-1zM1024 296h1v1h-1zM1024 282h1v1h-1zM1024 268h1v1h-1zM1024 255h1v1h-1zM1024 241h1v1h-1zM1024 227h1v1h-1zM1024 214h1v1h-1zM1024 200h1v1h-1zM1024 186h1v1h-1zM1024 173h1v1h-1zM1024 159h1v1h-1zM1038 719h1v1h-1zM1038 705h1v1h-1zM1038 691h1v1h-1zM1038 678h1v1h-1zM1038 664h1v1h-1zM1038 650h1v1h-1zM1038 637h1v1h-1zM1038 623h1v1h-1zM1038 609h1v1h-1zM1038 596h1v1h-1zM1038 582h1v1h-1zM1038 568h1v1h-1zM1038 555h1v1h-1zM1038 541h1v1h-1zM1038 528h1v1h-1zM1038 514h1v1h-1zM1038 500h1v1h-1zM1038 487h1v1h-1zM1038 473h1v1h-1zM1038 459h1v1h-1zM1038 446h1v1h-1zM1038 432h1v1h-1zM1038 418h1v1h-1zM1038 405h1v1h-1zM1038 391h1v1h-1zM1038 377h1v1h-1zM1038 364h1v1h-1zM1038 350h1v1h-1zM1038 337h1v1h-1zM1038 323h1v1h-1zM1038 309h1v1h-1zM1038 296h1v1h-1zM1038 282h1v1h-1zM1038 268h1v1h-1zM1038 255h1v1h-1zM1038 241h1v1h-1zM1038 227h1v1h-1zM1038 214h1v1h-1zM1038 200h1v1h-1zM1038 186h1v1h-1zM1038 173h1v1h-1zM1038 159h1v1h-1zM1052 719h1v1h-1zM1052 705h1v1h-1zM1052 691h1v1h-1zM1052 678h1v1h-1zM1052 664h1v1h-1zM1052 650h1v1h-1zM1052 637h1v1h-1zM1052 623h1v1h-1zM1052 609h1v1h-1zM1052 596h1v1h-1zM1052 582h1v1h-1zM1052 568h1v1h-1zM1052 555h1v1h-1zM1052 541h1v1h-1zM1052 528h1v1h-1zM1052 514h1v1h-1zM1052 500h1v1h-1zM1052 487h1v1h-1zM1052 473h1v1h-1zM1052 459h1v1h-1zM1052 446h1v1h-1zM1052 432h1v1h-1zM1052 418h1v1h-1zM1052 405h1v1h-1zM1052 391h1v1h-1zM1052 377h1v1h-1zM1052 364h1v1h-1zM1052 350h1v1h-1zM1052 337h1v1h-1zM1052 323h1v1h-1zM1052 309h1v1h-1zM1052 296h1v1h-1zM1052 282h1v1h-1zM1052 268h1v1h-1zM1052 255h1v1h-1zM1052 241h1v1h-1zM1052 227h1v1h-1zM1052 214h1v1h-1zM1052 200h1v1h-1zM1052 186h1v1h-1zM1052 173h1v1h-1zM1052 159h1v1h-1zM1065 719h1v1h-1zM1065 705h1v1h-1zM1065 691h1v1h-1zM1065 678h1v1h-1zM1065 664h1v1h-1zM1065 650h1v1h-1zM1065 637h1v1h-1zM1065 623h1v1h-1zM1065 609h1v1h-1zM1065 596h1v1h-1zM1065 582h1v1h-1zM1065 568h1v1h-1zM1065 555h1v1h-1zM1065 541h1v1h-1zM1065 528h1v1h-1zM1065 514h1v1h-1zM1065 500h1v1h-1zM1065 487h1v1h-1zM1065 473h1v1h-1zM1065 459h1v1h-1zM1065 446h1v1h-1zM1065 432h1v1h-1zM1065 418h1v1h-1zM1065 405h1v1h-1zM1065 391h1v1h-1zM1065 377h1v1h-1zM1065 364h1v1h-1zM1065 350h1v1h-1zM1065 337h1v1h-1zM1065 323h1v1h-1zM1065 309h1v1h-1zM1065 296h1v1h-1zM1065 282h1v1h-1zM1065 268h1v1h-1zM1065 255h1v1h-1zM1065 241h1v1h-1zM1065 227h1v1h-1zM1065 214h1v1h-1zM1065 200h1v1h-1zM1065 186h1v1h-1zM1065 173h1v1h-1zM1065 159h1v1h-1zM1079 719h1v1h-1zM1079 705h1v1h-1zM1079 691h1v1h-1zM1079 678h1v1h-1zM1079 664h1v1h-1zM1079 650h1v1h-1zM1079 637h1v1h-1zM1079 623h1v1h-1zM1079 609h1v1h-1zM1079 596h1v1h-1zM1079 582h1v1h-1zM1079 568h1v1h-1zM1079 555h1v1h-1zM1079 541h1v1h-1zM1079 528h1v1h-1zM1079 514h1v1h-1zM1079 500h1v1h-1zM1079 487h1v1h-1zM1079 473h1v1h-1zM1079 459h1v1h-1zM1079 446h1v1h-1zM1079 432h1v1h-1zM1079 418h1v1h-1zM1079 405h1v1h-1zM1079 391h1v1h-1zM1079 377h1v1h-1zM1079 364h1v1h-1zM1079 350h1v1h-1zM1079 337h1v1h-1zM1079 323h1v1h-1zM1079 309h1v1h-1zM1079 296h1v1h-1zM1079 282h1v1h-1zM1079 268h1v1h-1zM1079 255h1v1h-1zM1079 241h1v1h-1zM1079 227h1v1h-1zM1079 214h1v1h-1zM1079 200h1v1h-1zM1079 186h1v1h-1zM1079 173h1v1h-1zM1079 159h1v1h-1zM1092 719h1v1h-1zM1092 705h1v1h-1zM1092 691h1v1h-1zM1092 678h1v1h-1zM1092 664h1v1h-1zM1092 650h1v1h-1zM1092 637h1v1h-1zM1092 623h1v1h-1zM1092 609h1v1h-1zM1092 596h1v1h-1zM1092 582h1v1h-1zM1092 568h1v1h-1zM1092 555h1v1h-1zM1092 541h1v1h-1zM1092 528h1v1h-1zM1092 514h1v1h-1zM1092 500h1v1h-1zM1092 487h1v1h-1zM1092 473h1v1h-1zM1092 459h1v1h-1zM1092 446h1v1h-1zM1092 432h1v1h-1zM1092 418h1v1h-1zM1092 405h1v1h-1zM1092 391h1v1h-1zM1092 377h1v1h-1zM1092 364h1v1h-1zM1092 350h1v1h-1zM1092 337h1v1h-1zM1092 323h1v1h-1zM1092 309h1v1h-1zM1092 296h1v1h-1zM1092 282h1v1h-1zM1092 268h1v1h-1zM1092 255h1v1h-1zM1092 241h1v1h-1zM1092 227h1v1h-1zM1092 214h1v1h-1zM1092 200h1v1h-1zM1092 186h1v1h-1zM1092 173h1v1h-1zM1092 159h1v1h-1zM1106 719h1v1h-1zM1106 705h1v1h-1zM1106 691h1v1h-1zM1106 678h1v1h-1zM1106 664h1v1h-1zM1106 650h1v1h-1zM1106 637h1v1h-1zM1106 623h1v1h-1zM1106 609h1v1h-1zM1106 596h1v1h-1zM1106 582h1v1h-1zM1106 568h1v1h-1zM1106 555h1v1h-1zM1106 541h1v1h-1zM1106 528h1v1h-1zM1106 514h1v1h-1zM1106 500h1v1h-1zM1106 487h1v1h-1zM1106 473h1v1h-1zM1106 459h1v1h-1zM1106 446h1v1h-1zM1106 432h1v1h-1zM1106 418h1v1h-1zM1106 405h1v1h-1zM1106 391h1v1h-1zM1106 377h1v1h-1zM1106 364h1v1h-1zM1106 350h1v1h-1zM1106 337h1v1h-1zM1106 323h1v1h-1zM1106 309h1v1h-1zM1106 296h1v1h-1zM1106 282h1v1h-1zM1106 268h1v1h-1zM1106 255h1v1h-1zM1106 241h1v1h-1zM1106 227h1v1h-1zM1106 214h1v1h-1zM1106 200h1v1h-1zM1106 186h1v1h-1zM1106 173h1v1h-1zM1106 159h1v1h-1zM1120 719h1v1h-1zM1120 705h1v1h-1zM1120 691h1v1h-1zM1120 678h1v1h-1zM1120 664h1v1h-1zM1120 650h1v1h-1zM1120 637h1v1h-1zM1120 623h1v1h-1zM1120 609h1v1h-1zM1120 596h1v1h-1zM1120 582h1v1h-1zM1120 568h1v1h-1zM1120 555h1v1h-1zM1120 541h1v1h-1zM1120 528h1v1h-1zM1120 514h1v1h-1zM1120 500h1v1h-1zM1120 487h1v1h-1zM1120 473h1v1h-1zM1120 459h1v1h-1zM1120 446h1v1h-1zM1120 432h1v1h-1zM1120 418h1v1h-1zM1120 405h1v1h-1zM1120 391h1v1h-1zM1120 377h1v1h-1zM1120 364h1v1h-1zM1120 350h1v1h-1zM1120 337h1v1h-1zM1120 323h1v1h-1zM1120 309h1v1h-1zM1120 296h1v1h-1zM1120 282h1v1h-1zM1120 268h1v1h-1zM1120 255h1v1h-1zM1120 241h1v1h-1zM1120 227h1v1h-1zM1120 214h1v1h-1zM1120 200h1v1h-1zM1120 186h1v1h-1zM1120 173h1v1h-1zM1120 159h1v1h-1zM1133 719h1v1h-1zM1133 705h1v1h-1zM1133 691h1v1h-1zM1133 678h1v1h-1zM1133 664h1v1h-1zM1133 650h1v1h-1zM1133 637h1v1h-1zM1133 623h1v1h-1zM1133 609h1v1h-1zM1133 596h1v1h-1zM1133 582h1v1h-1zM1133 568h1v1h-1zM1133 555h1v1h-1zM1133 541h1v1h-1zM1133 528h1v1h-1zM1133 514h1v1h-1zM1133 500h1v1h-1zM1133 487h1v1h-1zM1133 473h1v1h-1zM1133 459h1v1h-1zM1133 446h1v1h-1zM1133 432h1v1h-1zM1133 418h1v1h-1zM1133 405h1v1h-1zM1133 391h1v1h-1zM1133 377h1v1h-1zM1133 364h1v1h-1zM1133 350h1v1h-1zM1133 337h1v1h-1zM1133 323h1v1h-1zM1133 309h1v1h-1zM1133 296h1v1h-1zM1133 282h1v1h-1zM1133 268h1v1h-1zM1133 255h1v1h-1zM1133 241h1v1h-1zM1133 227h1v1h-1zM1133 214h1v1h-1zM1133 200h1v1h-1zM1133 186h1v1h-1zM1133 173h1v1h-1zM1133 159h1v1h-1z"/></svg>
<div id="vscroll" class="a"><div class="a" style="left:5px;top:76px;width:8px;height:227px;border-radius:4px;background:#818181"></div></div>
<div id="hscroll" class="a"><div class="a" style="left:11px;top:5px;width:623px;height:8px;border-radius:4px;background:#818181"></div></div>
<div class="a" style="left:1099px;top:732px;width:55px;height:16px;background:#ebebeb"></div>
<div class="a" style="left:1118.5px;top:733px;font-size:12.4px;line-height:16px;color:#111">1 &lt; 10</div>
<div id="corner" class="a"></div>
<div id="hist" class="a"><div class="a" style="left:5px;top:-1px;font-size:13.3px;line-height:17px;color:#0a0ae0"><i>Comando:</i> preferences</div></div>
<div id="cmd" class="a">
<div class="a" style="left:1px;top:7px;font-size:13.2px;line-height:16px;color:#111">Comando:</div>
<div class="a" style="left:66px;top:5px;width:989px;height:18px;background:#fff"></div>
<div class="a" style="left:1055px;top:1.5px;width:26px;height:25px;border:1px solid #b8b8b8;background:linear-gradient(#e6e6e6,#f6f6f6)"><div class="a" style="left:5px;top:7px;width:14.5px;height:10px;border:1px solid #333;border-top:3px solid #000;background:#f4f4f4"></div></div>
</div>
<div id="docksep" class="a"></div>
<div id="layers" class="a"></div>
<div id="rdock" class="a"></div>
<svg class="a" style="left:1154px;top:106px" width="346" height="400" viewBox="1154 106 346 400"><defs><linearGradient id="gLBtn" x1="0" y1="0" x2="0" y2="1"><stop offset="0" stop-color="#e4e4e4"/><stop offset="1" stop-color="#f6f6f6"/></linearGradient><linearGradient id="gDTitle" x1="0" y1="0" x2="0" y2="1"><stop offset="0" stop-color="#f0f0f0"/><stop offset="1" stop-color="#dedede"/></linearGradient></defs><rect x="1156" y="108" width="298.5" height="22" fill="url(#gDTitle)"/><circle cx="1164" cy="118" r="7" fill="#6b6b6b"/><path d="M1160.8 114.8L1167.2 121.2M1167.2 114.8L1160.8 121.2" stroke="#f2f2f2" stroke-width="1.8"/><circle cx="1182" cy="118" r="7" fill="#6b6b6b"/><rect x="1178.3" y="117.3" width="5.2" height="4" fill="none" stroke="#eee" stroke-width="1"/><path d="M1180.3 115.8V114.6H1185.6V118.8H1184" fill="none" stroke="#eee" stroke-width="1"/><text x="1322.5" y="123" font-family="Liberation Sans" font-size="12" fill="#2a2a2a" text-anchor="middle">Elenco dei livelli</text><rect x="1156" y="130.5" width="298.5" height="26" fill="url(#gLBtn)"/><path d="M1156 131.3H1454.5M1156 156H1454.5M1156 130.5V157M1215.2 130.5V157M1275 130.5V157M1335 130.5V157M1395 130.5V157" stroke="#a9a9a9" stroke-width="1.8" fill="none"/><g transform="translate(1184.8 142.6) scale(1.0)"><path d="M-7.5 0.3C-5.5 -4.5 -2 -5.6 0.3 -5.4C4 -5.2 6.5 -3 7.6 0.2C6.2 3.8 3 5.4 0 5.3C-3.5 5.2 -6.3 3.5 -7.5 0.3Z" fill="#000"/><path d="M-4.2 0.6C-3.5 -2 -1.5 -2.6 0.2 -2.6C2.3 -2.6 3.9 -1.6 4.4 0.8C3.6 2.6 1.8 3.1 0 3.1C-2.1 3 -3.6 2.2 -4.2 0.6Z" fill="#fff"/><path d="M-2.6 -2.8C-2.8 0 -1.4 1.7 0.3 1.7C2.1 1.7 3 0 2.8 -2.8Z" fill="#000"/><circle cx="0.3" cy="-1.6" r="0.7" fill="#fff"/></g><g transform="translate(1244.8 142.6) scale(1.0)"><path d="M-7.5 0.3C-5.5 -4.5 -2 -5.6 0.3 -5.4C4 -5.2 6.5 -3 7.6 0.2C6.2 3.8 3 5.4 0 5.3C-3.5 5.2 -6.3 3.5 -7.5 0.3Z" fill="#a6a6a6"/><path d="M-4.2 0.6C-3.5 -2 -1.5 -2.6 0.2 -2.6C2.3 -2.6 3.9 -1.6 4.4 0.8C3.6 2.6 1.8 3.1 0 3.1C-2.1 3 -3.6 2.2 -4.2 0.6Z" fill="#fff"/><path d="M-2.6 -2.8C-2.8 0 -1.4 1.7 0.3 1.7C2.1 1.7 3 0 2.8 -2.8Z" fill="#a6a6a6"/><circle cx="0.3" cy="-1.6" r="0.7" fill="#fff"/></g><path d="M1303.7 136.6H1306.3V141.5H1311.2V144.1H1306.3V149H1303.7V144.1H1298.8V141.5H1303.7Z" fill="#f00" stroke="#500" stroke-width="0.5"/><rect x="1359" y="141.3" width="12" height="3.2" fill="#f00" stroke="#400" stroke-width="0.5"/><g transform="translate(1417.5 135.5) scale(1.0)"><path d="M0 14L1.6 10.2L10.6 1.2L12.8 3.4L3.8 12.4Z" fill="#e0a638" stroke="#8a5a10" stroke-width="0.6"/><path d="M10.6 1.2L11.8 0Q12.4 -0.5 13 0L14 1Q14.5 1.6 14 2.2L12.8 3.4Z" fill="#e82020" stroke="#8a2010" stroke-width="0.5"/><path d="M0 14L1.6 10.2L3.8 12.4Z" fill="#f4d8a8"/><path d="M0 14L0.7 12.3L1.7 13.3Z" fill="#333"/></g><rect x="1161.5" y="163.5" width="15" height="8" fill="#fff" stroke="#000" stroke-width="1.1"/><text x="1183.3" y="171.3" font-family="Liberation Sans" font-size="13" fill="#111">0</text><g transform="translate(1422.8 166.8) scale(1.0)"><path d="M-7.5 0.3C-5.5 -4.5 -2 -5.6 0.3 -5.4C4 -5.2 6.5 -3 7.6 0.2C6.2 3.8 3 5.4 0 5.3C-3.5 5.2 -6.3 3.5 -7.5 0.3Z" fill="#000"/><path d="M-4.2 0.6C-3.5 -2 -1.5 -2.6 0.2 -2.6C2.3 -2.6 3.9 -1.6 4.4 0.8C3.6 2.6 1.8 3.1 0 3.1C-2.1 3 -3.6 2.2 -4.2 0.6Z" fill="#fff"/><path d="M-2.6 -2.8C-2.8 0 -1.4 1.7 0.3 1.7C2.1 1.7 3 0 2.8 -2.8Z" fill="#000"/><circle cx="0.3" cy="-1.6" r="0.7" fill="#fff"/></g><path d="M1441.8 166.2V164.2A3.2 3.2 0 0 1 1448.2 164.2V166.2" fill="none" stroke="#bcbcbc" stroke-width="1.3"/><rect x="1440" y="166.2" width="10" height="7.5" fill="#bcbcbc"/><rect x="1161.5" y="183.5" width="15" height="8" fill="#f00" stroke="#000" stroke-width="1.1"/><text x="1183.3" y="191.3" font-family="Liberation Sans" font-size="13" fill="#111">Center</text><g transform="translate(1422.8 186.8) scale(1.0)"><path d="M-7.5 0.3C-5.5 -4.5 -2 -5.6 0.3 -5.4C4 -5.2 6.5 -3 7.6 0.2C6.2 3.8 3 5.4 0 5.3C-3.5 5.2 -6.3 3.5 -7.5 0.3Z" fill="#000"/><path d="M-4.2 0.6C-3.5 -2 -1.5 -2.6 0.2 -2.6C2.3 -2.6 3.9 -1.6 4.4 0.8C3.6 2.6 1.8 3.1 0 3.1C-2.1 3 -3.6 2.2 -4.2 0.6Z" fill="#fff"/><path d="M-2.6 -2.8C-2.8 0 -1.4 1.7 0.3 1.7C2.1 1.7 3 0 2.8 -2.8Z" fill="#000"/><circle cx="0.3" cy="-1.6" r="0.7" fill="#fff"/></g><path d="M1441.8 186.2V184.2A3.2 3.2 0 0 1 1448.2 184.2V186.2" fill="none" stroke="#bcbcbc" stroke-width="1.3"/><rect x="1440" y="186.2" width="10" height="7.5" fill="#bcbcbc"/><rect x="1161.5" y="203.5" width="15" height="8" fill="#fff" stroke="#000" stroke-width="1.1"/><text x="1183.3" y="211.3" font-family="Liberation Sans" font-size="13" fill="#111">Defpoints</text><g transform="translate(1422.8 206.8) scale(1.0)"><path d="M-7.5 0.3C-5.5 -4.5 -2 -5.6 0.3 -5.4C4 -5.2 6.5 -3 7.6 0.2C6.2 3.8 3 5.4 0 5.3C-3.5 5.2 -6.3 3.5 -7.5 0.3Z" fill="#000"/><path d="M-4.2 0.6C-3.5 -2 -1.5 -2.6 0.2 -2.6C2.3 -2.6 3.9 -1.6 4.4 0.8C3.6 2.6 1.8 3.1 0 3.1C-2.1 3 -3.6 2.2 -4.2 0.6Z" fill="#fff"/><path d="M-2.6 -2.8C-2.8 0 -1.4 1.7 0.3 1.7C2.1 1.7 3 0 2.8 -2.8Z" fill="#000"/><circle cx="0.3" cy="-1.6" r="0.7" fill="#fff"/></g><path d="M1441.8 206.2V204.2A3.2 3.2 0 0 1 1448.2 204.2V206.2" fill="none" stroke="#bcbcbc" stroke-width="1.3"/><rect x="1440" y="206.2" width="10" height="7.5" fill="#bcbcbc"/><rect x="1161.5" y="223.5" width="15" height="8" fill="#1e90ff" stroke="#000" stroke-width="1.1"/><text x="1183.3" y="231.3" font-family="Liberation Sans" font-size="13" fill="#111">Dimensions</text><g transform="translate(1422.8 226.8) scale(1.0)"><path d="M-7.5 0.3C-5.5 -4.5 -2 -5.6 0.3 -5.4C4 -5.2 6.5 -3 7.6 0.2C6.2 3.8 3 5.4 0 5.3C-3.5 5.2 -6.3 3.5 -7.5 0.3Z" fill="#000"/><path d="M-4.2 0.6C-3.5 -2 -1.5 -2.6 0.2 -2.6C2.3 -2.6 3.9 -1.6 4.4 0.8C3.6 2.6 1.8 3.1 0 3.1C-2.1 3 -3.6 2.2 -4.2 0.6Z" fill="#fff"/><path d="M-2.6 -2.8C-2.8 0 -1.4 1.7 0.3 1.7C2.1 1.7 3 0 2.8 -2.8Z" fill="#000"/><circle cx="0.3" cy="-1.6" r="0.7" fill="#fff"/></g><path d="M1441.8 226.2V224.2A3.2 3.2 0 0 1 1448.2 224.2V226.2" fill="none" stroke="#bcbcbc" stroke-width="1.3"/><rect x="1440" y="226.2" width="10" height="7.5" fill="#bcbcbc"/><rect x="1161.5" y="243.5" width="15" height="8" fill="#000" stroke="#000" stroke-width="1.1"/><text x="1183.3" y="251.3" font-family="Liberation Sans" font-size="13" fill="#111">Hidden</text><g transform="translate(1422.8 246.8) scale(1.0)"><path d="M-7.5 0.3C-5.5 -4.5 -2 -5.6 0.3 -5.4C4 -5.2 6.5 -3 7.6 0.2C6.2 3.8 3 5.4 0 5.3C-3.5 5.2 -6.3 3.5 -7.5 0.3Z" fill="#000"/><path d="M-4.2 0.6C-3.5 -2 -1.5 -2.6 0.2 -2.6C2.3 -2.6 3.9 -1.6 4.4 0.8C3.6 2.6 1.8 3.1 0 3.1C-2.1 3 -3.6 2.2 -4.2 0.6Z" fill="#fff"/><path d="M-2.6 -2.8C-2.8 0 -1.4 1.7 0.3 1.7C2.1 1.7 3 0 2.8 -2.8Z" fill="#000"/><circle cx="0.3" cy="-1.6" r="0.7" fill="#fff"/></g><path d="M1441.8 246.2V244.2A3.2 3.2 0 0 1 1448.2 244.2V246.2" fill="none" stroke="#bcbcbc" stroke-width="1.3"/><rect x="1440" y="246.2" width="10" height="7.5" fill="#bcbcbc"/><g transform="translate(1394.5 180.5) scale(0.95)"><path d="M0 14L1.6 10.2L10.6 1.2L12.8 3.4L3.8 12.4Z" fill="#e0a638" stroke="#8a5a10" stroke-width="0.6"/><path d="M10.6 1.2L11.8 0Q12.4 -0.5 13 0L14 1Q14.5 1.6 14 2.2L12.8 3.4Z" fill="#e82020" stroke="#8a2010" stroke-width="0.5"/><path d="M0 14L1.6 10.2L3.8 12.4Z" fill="#f4d8a8"/><path d="M0 14L0.7 12.3L1.7 13.3Z" fill="#333"/></g><rect x="1462.5" y="116.3" width="2" height="2" fill="#a0a0a0"/><rect x="1467.5" y="116.3" width="2" height="2" fill="#a0a0a0"/><rect x="1472.5" y="116.3" width="2" height="2" fill="#a0a0a0"/><rect x="1477.5" y="116.3" width="2" height="2" fill="#a0a0a0"/><rect x="1482.5" y="116.3" width="2" height="2" fill="#a0a0a0"/><rect x="1487.5" y="116.3" width="2" height="2" fill="#a0a0a0"/><rect x="1456.3" y="120.7" width="42.2" height="41.5" rx="6" fill="#b6b6b6"/><rect x="1463.8" y="127.8" width="27" height="27" fill="#fff" stroke="#444" stroke-width="1"/><rect x="1463.8" y="127.8" width="27" height="4.5" fill="#000"/><rect x="1465.0" y="128.8" width="2.6" height="2.6" fill="#fff"/><path d="M1474 144.5V137L1486 133V140.5Z" fill="#fff" stroke="#777" stroke-width="0.8"/><path d="M1471.5 146V138.5L1474 137V144.5ZM1471.5 146L1483 142.5" fill="#cfcfcf" stroke="#777" stroke-width="0.8"/><path d="M1478 141.5L1481.5 135.5L1482.5 140.5ZM1477.5 141.3H1484" fill="none" stroke="#f05050" stroke-width="0.8"/><rect x="1463.8" y="174.9" width="27" height="27" fill="#fff" stroke="#444" stroke-width="1"/><rect x="1463.8" y="174.9" width="27" height="4.5" fill="#000"/><rect x="1465.0" y="175.9" width="2.6" height="2.6" fill="#fff"/><rect x="1470.3" y="184.5" width="10.5" height="7.5" fill="#f6ebc4" stroke="#555" stroke-width="0.7"/><circle cx="1479.5" cy="191.5" r="4.6" fill="#f6ebc4" fill-opacity="0.85" stroke="#8a8a70" stroke-width="0.7"/><rect x="1463.8" y="220.7" width="27" height="27" fill="#fff" stroke="#444" stroke-width="1"/><rect x="1463.8" y="220.7" width="27" height="4.5" fill="#000"/><rect x="1465.0" y="221.7" width="2.6" height="2.6" fill="#fff"/><rect x="1468.8" y="229.5" width="16.5" height="11" rx="2" fill="#f6f6f6" stroke="#b8c8e0" stroke-width="0.8"/><rect x="1457" y="261" width="1.3" height="1.3" fill="#7a7a7a"/><rect x="1460" y="261" width="1.3" height="1.3" fill="#7a7a7a"/><rect x="1463" y="261" width="1.3" height="1.3" fill="#7a7a7a"/><rect x="1466" y="261" width="1.3" height="1.3" fill="#7a7a7a"/><rect x="1469" y="261" width="1.3" height="1.3" fill="#7a7a7a"/><rect x="1472" y="261" width="1.3" height="1.3" fill="#7a7a7a"/><rect x="1475" y="261" width="1.3" height="1.3" fill="#7a7a7a"/><rect x="1478" y="261" width="1.3" height="1.3" fill="#7a7a7a"/><rect x="1481" y="261" width="1.3" height="1.3" fill="#7a7a7a"/><rect x="1484" y="261" width="1.3" height="1.3" fill="#7a7a7a"/><rect x="1487" y="261" width="1.3" height="1.3" fill="#7a7a7a"/><rect x="1490" y="261" width="1.3" height="1.3" fill="#7a7a7a"/><rect x="1493" y="261" width="1.3" height="1.3" fill="#7a7a7a"/><rect x="1496" y="261" width="1.3" height="1.3" fill="#7a7a7a"/><rect x="1463.8" y="276.7" width="27" height="27" fill="#fff" stroke="#444" stroke-width="1"/><rect x="1463.8" y="276.7" width="27" height="4.5" fill="#000"/><rect x="1465.0" y="277.7" width="2.6" height="2.6" fill="#fff"/><rect x="1467.5" y="283.3" width="3.2" height="2.4" fill="#000"/><rect x="1473.5" y="283.1" width="12.5" height="2.6" fill="#fff" stroke="#333" stroke-width="0.7"/><rect x="1467.5" y="286.90000000000003" width="3.2" height="2.4" fill="#000"/><rect x="1473.5" y="286.70000000000005" width="12.5" height="2.6" fill="#fff" stroke="#333" stroke-width="0.7"/><rect x="1467.5" y="290.5" width="3.2" height="2.4" fill="#000"/><rect x="1473.5" y="290.3" width="12.5" height="2.6" fill="#fff" stroke="#333" stroke-width="0.7"/><rect x="1463.8" y="322.8" width="27" height="27" fill="#fff" stroke="#444" stroke-width="1"/><rect x="1463.8" y="322.8" width="27" height="4.5" fill="#000"/><rect x="1465.0" y="323.8" width="2.6" height="2.6" fill="#fff"/><path d="M1470 331.7Q1477 329 1484.5 331.7L1478.5 338V344.8L1476.3 343.2V338Z" fill="#a8a8a8" stroke="#555" stroke-width="0.7"/><rect x="1463.8" y="368.7" width="27" height="27" fill="#fff" stroke="#444" stroke-width="1"/><rect x="1463.8" y="368.7" width="27" height="4.5" fill="#000"/><rect x="1465.0" y="369.7" width="2.6" height="2.6" fill="#fff"/><path d="M1469 376V391L1473 386V381Z" fill="#f4f4f4" stroke="#444" stroke-width="0.7"/><rect x="1473" y="379.5" width="10.5" height="7.5" rx="1.5" fill="#9a9a9a" stroke="#555" stroke-width="0.6"/><path d="M1467 383.5H1488" stroke="#f08080" stroke-width="0.7" stroke-dasharray="1.5 1"/><rect x="1457" y="408.8" width="1.3" height="1.3" fill="#7a7a7a"/><rect x="1460" y="408.8" width="1.3" height="1.3" fill="#7a7a7a"/><rect x="1463" y="408.8" width="1.3" height="1.3" fill="#7a7a7a"/><rect x="1466" y="408.8" width="1.3" height="1.3" fill="#7a7a7a"/><rect x="1469" y="408.8" width="1.3" height="1.3" fill="#7a7a7a"/><rect x="1472" y="408.8" width="1.3" height="1.3" fill="#7a7a7a"/><rect x="1475" y="408.8" width="1.3" height="1.3" fill="#7a7a7a"/><rect x="1478" y="408.8" width="1.3" height="1.3" fill="#7a7a7a"/><rect x="1481" y="408.8" width="1.3" height="1.3" fill="#7a7a7a"/><rect x="1484" y="408.8" width="1.3" height="1.3" fill="#7a7a7a"/><rect x="1487" y="408.8" width="1.3" height="1.3" fill="#7a7a7a"/><rect x="1490" y="408.8" width="1.3" height="1.3" fill="#7a7a7a"/><rect x="1493" y="408.8" width="1.3" height="1.3" fill="#7a7a7a"/><rect x="1496" y="408.8" width="1.3" height="1.3" fill="#7a7a7a"/><rect x="1456.2" y="417" width="42.3" height="42.7" rx="6" fill="#b6b6b6"/><rect x="1463.6" y="424.8" width="27" height="27" fill="#fff" stroke="#444" stroke-width="1"/><rect x="1463.6" y="424.8" width="27" height="4.5" fill="#000"/><rect x="1464.8" y="425.8" width="2.6" height="2.6" fill="#fff"/><path d="M1465.5 433H1474M1465.5 436H1472M1465.5 439H1474.5M1465.5 442H1475" stroke="#b8b8b8" stroke-width="0.8"/><path d="M1463.6 445.5H1490.6" stroke="#444" stroke-width="0.7"/><path d="M1466 448.5H1468M1474 448.5H1486" stroke="#666" stroke-width="0.9"/><rect x="1463.6" y="471.7" width="27" height="27" fill="#fff" stroke="#444" stroke-width="1"/><rect x="1463.6" y="471.7" width="27" height="4.5" fill="#000"/><rect x="1464.8" y="472.7" width="2.6" height="2.6" fill="#fff"/><rect x="1470.5" y="481" width="13" height="14" rx="1" fill="#c8861a"/><rect x="1472" y="482.5" width="10" height="11" fill="#f2f2f2"/><rect x="1474" y="479.5" width="6" height="3" fill="#9a9a8e"/></svg>
<div id="status" class="a">
<div class="a" style="left:2px;top:8px;font-size:10px;line-height:12px;letter-spacing:0.27px;color:#1a1a1a">30.6753,62.4939</div>
<div class="a" style="left:2px;top:28px;font-size:10px;line-height:12px;letter-spacing:0.27px;color:#1a1a1a">@30.6753,62.4939</div>
<div class="a" style="left:253px;top:4px;width:1px;height:40px;background:#9a9a9a"></div>
<div class="a" style="left:256px;top:8px;font-size:10px;line-height:12px;letter-spacing:0.27px;color:#1a1a1a">69.6165&lt;64°</div>
<div class="a" style="left:256px;top:28px;font-size:10px;line-height:12px;letter-spacing:0.27px;color:#1a1a1a">@69.6165&lt;64°</div>
<div class="a" style="left:506px;top:20px;width:7px;height:7px;border-radius:50%;background:#c4c4c4"></div>
<div class="a" style="left:571.5px;top:18px;font-size:10px;line-height:12px;letter-spacing:0.1px;color:#1a1a1a">Selezionare entità o regione</div>
<svg class="a" style="left:715px;top:5px" width="24" height="38" viewBox="715 803 24 38"><path d="M719 813.5A7.5 7.5 0 0 1 734 813.5V829A7.5 7.5 0 0 1 719 829Z" fill="#fff" stroke="#333" stroke-width="1"/><path d="M719 819H734M726.5 806V819" stroke="#333" stroke-width="0.9"/><rect x="725" y="809.5" width="3" height="6" rx="1.5" fill="none" stroke="#333" stroke-width="0.8"/></svg>
<div class="a" style="left:939px;top:20px;width:7px;height:7px;border-radius:50%;background:#c4c4c4"></div>
<div class="a" style="left:948.5px;top:18px;font-size:10px;line-height:12px;letter-spacing:0.08px;color:#1a1a1a">Nessun entità selezionate.</div>
<div class="a" style="left:1268px;top:20px;width:7px;height:7px;border-radius:50%;background:#c4c4c4"></div>
</div>
<svg class="a" style="left:990px;top:10px" width="110" height="100" viewBox="990 10 110 100"><rect x="1011" y="25" width="42.2" height="42" fill="#f04848" opacity="0.2"/><g stroke="#f04848" stroke-width="1.6" opacity="0.75"><path d="M1002 25.3H1061M1002 66.8H1061M1011 16V75M1053.2 16V75"/></g><circle cx="1041.5" cy="55" r="36.8" fill="none" stroke="#9db2c8" stroke-width="3.6" opacity="0.55"/><circle cx="1041.5" cy="55" r="34.5" fill="none" stroke="#c8d4e0" stroke-width="1.2" opacity="0.45"/></svg>
<div class="a" style="left:1037px;top:91px;width:117px;height:24px;background:linear-gradient(#f8f9fb,#e2e7ee);border:1px solid #d4d8dc;border-radius:2px;box-shadow:1.5px 2px 1px rgba(0,0,0,0.45)"><div class="a" style="left:4.5px;top:3.5px;font-size:13.9px;line-height:17px;color:#111;white-space:nowrap">Zoom automatico</div></div>
<svg class="a" style="left:1035px;top:50px" width="30" height="40" viewBox="1035 50 30 40"><path d="M1042.20 55.60 L1042.20 77.64 L1047.22 72.63 L1051.18 82.13 L1054.34 80.81 L1050.38 71.44 L1057.25 70.78Z" fill="#fff" stroke="#000" stroke-width="1.3" stroke-linejoin="round"/></svg>

</body></html>
